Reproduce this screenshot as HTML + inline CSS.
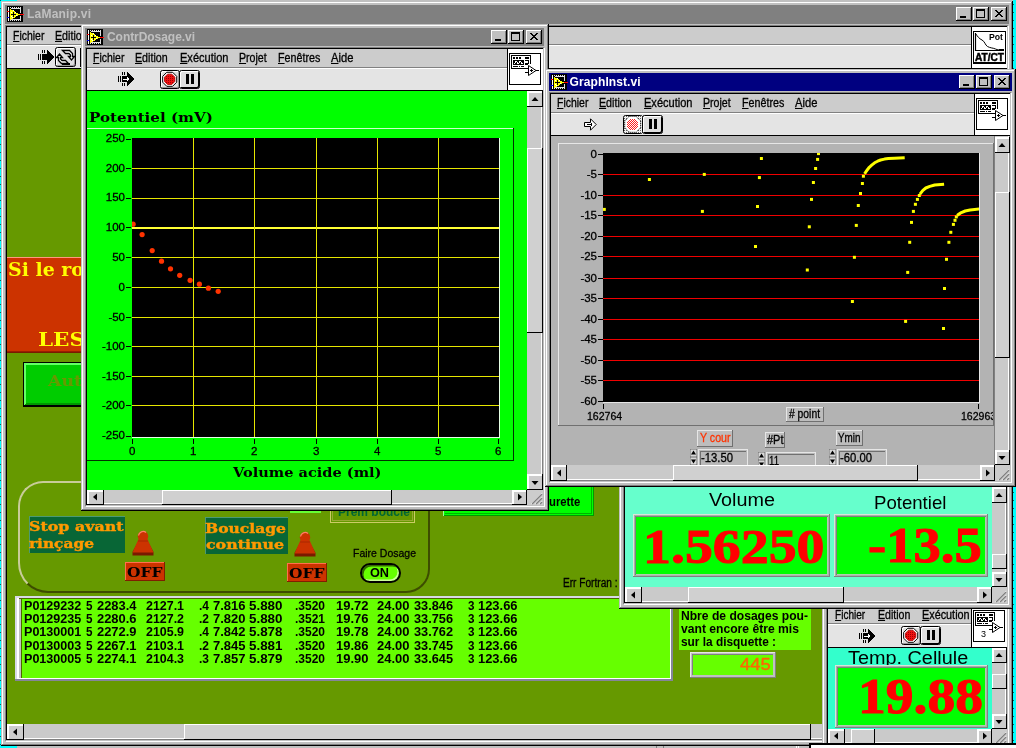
<!DOCTYPE html>
<html lang="fr"><head><meta charset="utf-8"><title>LaManip.vi</title>
<style>
html,body{margin:0;padding:0;}
body{width:1016px;height:748px;overflow:hidden;position:relative;background:#c0c0c0;}
#scr{position:absolute;left:0;top:0;width:1016px;height:748px;overflow:hidden;}
#scr div,#scr span.t,#scr svg{position:absolute;}
#scr span.t{display:block;margin:0;padding:0;-webkit-font-smoothing:antialiased;}
#scr{transform:translateZ(0);will-change:transform;}
#scr u{text-decoration:underline;text-underline-offset:1px;}
</style></head><body><div id="scr">
<div style="left:0px;top:0px;width:17px;height:1px;background:#00ffff;"></div>
<div style="left:0px;top:0px;width:1px;height:748px;background:#00ffff;"></div>
<div style="left:1013px;top:0px;width:3px;height:748px;background:#00ffff;"></div>
<div style="left:0px;top:746px;width:17px;height:2px;background:#00ffff;"></div>
<div style="left:0px;top:0px;width:1px;height:1px;background:#006666;"></div>
<div style="left:1013px;top:4px;width:1px;height:1px;background:#006666;"></div>
<div style="left:0px;top:8px;width:1px;height:1px;background:#006666;"></div>
<div style="left:1013px;top:12px;width:1px;height:1px;background:#006666;"></div>
<div style="left:0px;top:16px;width:1px;height:1px;background:#006666;"></div>
<div style="left:1013px;top:20px;width:1px;height:1px;background:#006666;"></div>
<div style="left:0px;top:24px;width:1px;height:1px;background:#006666;"></div>
<div style="left:1013px;top:28px;width:1px;height:1px;background:#006666;"></div>
<div style="left:0px;top:32px;width:1px;height:1px;background:#006666;"></div>
<div style="left:1013px;top:36px;width:1px;height:1px;background:#006666;"></div>
<div style="left:0px;top:40px;width:1px;height:1px;background:#006666;"></div>
<div style="left:1013px;top:44px;width:1px;height:1px;background:#006666;"></div>
<div style="left:0px;top:48px;width:1px;height:1px;background:#006666;"></div>
<div style="left:1013px;top:52px;width:1px;height:1px;background:#006666;"></div>
<div style="left:0px;top:56px;width:1px;height:1px;background:#006666;"></div>
<div style="left:1013px;top:60px;width:1px;height:1px;background:#006666;"></div>
<div style="left:0px;top:64px;width:1px;height:1px;background:#006666;"></div>
<div style="left:1013px;top:68px;width:1px;height:1px;background:#006666;"></div>
<div style="left:0px;top:72px;width:1px;height:1px;background:#006666;"></div>
<div style="left:1013px;top:76px;width:1px;height:1px;background:#006666;"></div>
<div style="left:0px;top:80px;width:1px;height:1px;background:#006666;"></div>
<div style="left:1013px;top:84px;width:1px;height:1px;background:#006666;"></div>
<div style="left:0px;top:88px;width:1px;height:1px;background:#006666;"></div>
<div style="left:1013px;top:92px;width:1px;height:1px;background:#006666;"></div>
<div style="left:0px;top:96px;width:1px;height:1px;background:#006666;"></div>
<div style="left:1013px;top:100px;width:1px;height:1px;background:#006666;"></div>
<div style="left:0px;top:104px;width:1px;height:1px;background:#006666;"></div>
<div style="left:1013px;top:108px;width:1px;height:1px;background:#006666;"></div>
<div style="left:0px;top:112px;width:1px;height:1px;background:#006666;"></div>
<div style="left:1013px;top:116px;width:1px;height:1px;background:#006666;"></div>
<div style="left:0px;top:120px;width:1px;height:1px;background:#006666;"></div>
<div style="left:1013px;top:124px;width:1px;height:1px;background:#006666;"></div>
<div style="left:0px;top:128px;width:1px;height:1px;background:#006666;"></div>
<div style="left:1013px;top:132px;width:1px;height:1px;background:#006666;"></div>
<div style="left:0px;top:136px;width:1px;height:1px;background:#006666;"></div>
<div style="left:1013px;top:140px;width:1px;height:1px;background:#006666;"></div>
<div style="left:0px;top:144px;width:1px;height:1px;background:#006666;"></div>
<div style="left:1013px;top:148px;width:1px;height:1px;background:#006666;"></div>
<div style="left:0px;top:152px;width:1px;height:1px;background:#006666;"></div>
<div style="left:1013px;top:156px;width:1px;height:1px;background:#006666;"></div>
<div style="left:0px;top:160px;width:1px;height:1px;background:#006666;"></div>
<div style="left:1013px;top:164px;width:1px;height:1px;background:#006666;"></div>
<div style="left:0px;top:168px;width:1px;height:1px;background:#006666;"></div>
<div style="left:1013px;top:172px;width:1px;height:1px;background:#006666;"></div>
<div style="left:0px;top:176px;width:1px;height:1px;background:#006666;"></div>
<div style="left:1013px;top:180px;width:1px;height:1px;background:#006666;"></div>
<div style="left:0px;top:184px;width:1px;height:1px;background:#006666;"></div>
<div style="left:1013px;top:188px;width:1px;height:1px;background:#006666;"></div>
<div style="left:0px;top:192px;width:1px;height:1px;background:#006666;"></div>
<div style="left:1013px;top:196px;width:1px;height:1px;background:#006666;"></div>
<div style="left:0px;top:200px;width:1px;height:1px;background:#006666;"></div>
<div style="left:1013px;top:204px;width:1px;height:1px;background:#006666;"></div>
<div style="left:0px;top:208px;width:1px;height:1px;background:#006666;"></div>
<div style="left:1013px;top:212px;width:1px;height:1px;background:#006666;"></div>
<div style="left:0px;top:216px;width:1px;height:1px;background:#006666;"></div>
<div style="left:1013px;top:220px;width:1px;height:1px;background:#006666;"></div>
<div style="left:0px;top:224px;width:1px;height:1px;background:#006666;"></div>
<div style="left:1013px;top:228px;width:1px;height:1px;background:#006666;"></div>
<div style="left:0px;top:232px;width:1px;height:1px;background:#006666;"></div>
<div style="left:1013px;top:236px;width:1px;height:1px;background:#006666;"></div>
<div style="left:0px;top:240px;width:1px;height:1px;background:#006666;"></div>
<div style="left:1013px;top:244px;width:1px;height:1px;background:#006666;"></div>
<div style="left:0px;top:248px;width:1px;height:1px;background:#006666;"></div>
<div style="left:1013px;top:252px;width:1px;height:1px;background:#006666;"></div>
<div style="left:0px;top:256px;width:1px;height:1px;background:#006666;"></div>
<div style="left:1013px;top:260px;width:1px;height:1px;background:#006666;"></div>
<div style="left:0px;top:264px;width:1px;height:1px;background:#006666;"></div>
<div style="left:1013px;top:268px;width:1px;height:1px;background:#006666;"></div>
<div style="left:0px;top:272px;width:1px;height:1px;background:#006666;"></div>
<div style="left:1013px;top:276px;width:1px;height:1px;background:#006666;"></div>
<div style="left:0px;top:280px;width:1px;height:1px;background:#006666;"></div>
<div style="left:1013px;top:284px;width:1px;height:1px;background:#006666;"></div>
<div style="left:0px;top:288px;width:1px;height:1px;background:#006666;"></div>
<div style="left:1013px;top:292px;width:1px;height:1px;background:#006666;"></div>
<div style="left:0px;top:296px;width:1px;height:1px;background:#006666;"></div>
<div style="left:1013px;top:300px;width:1px;height:1px;background:#006666;"></div>
<div style="left:0px;top:304px;width:1px;height:1px;background:#006666;"></div>
<div style="left:1013px;top:308px;width:1px;height:1px;background:#006666;"></div>
<div style="left:0px;top:312px;width:1px;height:1px;background:#006666;"></div>
<div style="left:1013px;top:316px;width:1px;height:1px;background:#006666;"></div>
<div style="left:0px;top:320px;width:1px;height:1px;background:#006666;"></div>
<div style="left:1013px;top:324px;width:1px;height:1px;background:#006666;"></div>
<div style="left:0px;top:328px;width:1px;height:1px;background:#006666;"></div>
<div style="left:1013px;top:332px;width:1px;height:1px;background:#006666;"></div>
<div style="left:0px;top:336px;width:1px;height:1px;background:#006666;"></div>
<div style="left:1013px;top:340px;width:1px;height:1px;background:#006666;"></div>
<div style="left:0px;top:344px;width:1px;height:1px;background:#006666;"></div>
<div style="left:1013px;top:348px;width:1px;height:1px;background:#006666;"></div>
<div style="left:0px;top:352px;width:1px;height:1px;background:#006666;"></div>
<div style="left:1013px;top:356px;width:1px;height:1px;background:#006666;"></div>
<div style="left:0px;top:360px;width:1px;height:1px;background:#006666;"></div>
<div style="left:1013px;top:364px;width:1px;height:1px;background:#006666;"></div>
<div style="left:0px;top:368px;width:1px;height:1px;background:#006666;"></div>
<div style="left:1013px;top:372px;width:1px;height:1px;background:#006666;"></div>
<div style="left:0px;top:376px;width:1px;height:1px;background:#006666;"></div>
<div style="left:1013px;top:380px;width:1px;height:1px;background:#006666;"></div>
<div style="left:0px;top:384px;width:1px;height:1px;background:#006666;"></div>
<div style="left:1013px;top:388px;width:1px;height:1px;background:#006666;"></div>
<div style="left:0px;top:392px;width:1px;height:1px;background:#006666;"></div>
<div style="left:1013px;top:396px;width:1px;height:1px;background:#006666;"></div>
<div style="left:0px;top:400px;width:1px;height:1px;background:#006666;"></div>
<div style="left:1013px;top:404px;width:1px;height:1px;background:#006666;"></div>
<div style="left:0px;top:408px;width:1px;height:1px;background:#006666;"></div>
<div style="left:1013px;top:412px;width:1px;height:1px;background:#006666;"></div>
<div style="left:0px;top:416px;width:1px;height:1px;background:#006666;"></div>
<div style="left:1013px;top:420px;width:1px;height:1px;background:#006666;"></div>
<div style="left:0px;top:424px;width:1px;height:1px;background:#006666;"></div>
<div style="left:1013px;top:428px;width:1px;height:1px;background:#006666;"></div>
<div style="left:0px;top:432px;width:1px;height:1px;background:#006666;"></div>
<div style="left:1013px;top:436px;width:1px;height:1px;background:#006666;"></div>
<div style="left:0px;top:440px;width:1px;height:1px;background:#006666;"></div>
<div style="left:1013px;top:444px;width:1px;height:1px;background:#006666;"></div>
<div style="left:0px;top:448px;width:1px;height:1px;background:#006666;"></div>
<div style="left:1013px;top:452px;width:1px;height:1px;background:#006666;"></div>
<div style="left:0px;top:456px;width:1px;height:1px;background:#006666;"></div>
<div style="left:1013px;top:460px;width:1px;height:1px;background:#006666;"></div>
<div style="left:0px;top:464px;width:1px;height:1px;background:#006666;"></div>
<div style="left:1013px;top:468px;width:1px;height:1px;background:#006666;"></div>
<div style="left:0px;top:472px;width:1px;height:1px;background:#006666;"></div>
<div style="left:1013px;top:476px;width:1px;height:1px;background:#006666;"></div>
<div style="left:0px;top:480px;width:1px;height:1px;background:#006666;"></div>
<div style="left:1013px;top:484px;width:1px;height:1px;background:#006666;"></div>
<div style="left:0px;top:488px;width:1px;height:1px;background:#006666;"></div>
<div style="left:1013px;top:492px;width:1px;height:1px;background:#006666;"></div>
<div style="left:0px;top:496px;width:1px;height:1px;background:#006666;"></div>
<div style="left:1013px;top:500px;width:1px;height:1px;background:#006666;"></div>
<div style="left:0px;top:504px;width:1px;height:1px;background:#006666;"></div>
<div style="left:1013px;top:508px;width:1px;height:1px;background:#006666;"></div>
<div style="left:0px;top:512px;width:1px;height:1px;background:#006666;"></div>
<div style="left:1013px;top:516px;width:1px;height:1px;background:#006666;"></div>
<div style="left:0px;top:520px;width:1px;height:1px;background:#006666;"></div>
<div style="left:1013px;top:524px;width:1px;height:1px;background:#006666;"></div>
<div style="left:0px;top:528px;width:1px;height:1px;background:#006666;"></div>
<div style="left:1013px;top:532px;width:1px;height:1px;background:#006666;"></div>
<div style="left:0px;top:536px;width:1px;height:1px;background:#006666;"></div>
<div style="left:1013px;top:540px;width:1px;height:1px;background:#006666;"></div>
<div style="left:0px;top:544px;width:1px;height:1px;background:#006666;"></div>
<div style="left:1013px;top:548px;width:1px;height:1px;background:#006666;"></div>
<div style="left:0px;top:552px;width:1px;height:1px;background:#006666;"></div>
<div style="left:1013px;top:556px;width:1px;height:1px;background:#006666;"></div>
<div style="left:0px;top:560px;width:1px;height:1px;background:#006666;"></div>
<div style="left:1013px;top:564px;width:1px;height:1px;background:#006666;"></div>
<div style="left:0px;top:568px;width:1px;height:1px;background:#006666;"></div>
<div style="left:1013px;top:572px;width:1px;height:1px;background:#006666;"></div>
<div style="left:0px;top:576px;width:1px;height:1px;background:#006666;"></div>
<div style="left:1013px;top:580px;width:1px;height:1px;background:#006666;"></div>
<div style="left:0px;top:584px;width:1px;height:1px;background:#006666;"></div>
<div style="left:1013px;top:588px;width:1px;height:1px;background:#006666;"></div>
<div style="left:0px;top:592px;width:1px;height:1px;background:#006666;"></div>
<div style="left:1013px;top:596px;width:1px;height:1px;background:#006666;"></div>
<div style="left:0px;top:600px;width:1px;height:1px;background:#006666;"></div>
<div style="left:1013px;top:604px;width:1px;height:1px;background:#006666;"></div>
<div style="left:0px;top:608px;width:1px;height:1px;background:#006666;"></div>
<div style="left:1013px;top:612px;width:1px;height:1px;background:#006666;"></div>
<div style="left:0px;top:616px;width:1px;height:1px;background:#006666;"></div>
<div style="left:1013px;top:620px;width:1px;height:1px;background:#006666;"></div>
<div style="left:0px;top:624px;width:1px;height:1px;background:#006666;"></div>
<div style="left:1013px;top:628px;width:1px;height:1px;background:#006666;"></div>
<div style="left:0px;top:632px;width:1px;height:1px;background:#006666;"></div>
<div style="left:1013px;top:636px;width:1px;height:1px;background:#006666;"></div>
<div style="left:0px;top:640px;width:1px;height:1px;background:#006666;"></div>
<div style="left:1013px;top:644px;width:1px;height:1px;background:#006666;"></div>
<div style="left:0px;top:648px;width:1px;height:1px;background:#006666;"></div>
<div style="left:1013px;top:652px;width:1px;height:1px;background:#006666;"></div>
<div style="left:0px;top:656px;width:1px;height:1px;background:#006666;"></div>
<div style="left:1013px;top:660px;width:1px;height:1px;background:#006666;"></div>
<div style="left:0px;top:664px;width:1px;height:1px;background:#006666;"></div>
<div style="left:1013px;top:668px;width:1px;height:1px;background:#006666;"></div>
<div style="left:0px;top:672px;width:1px;height:1px;background:#006666;"></div>
<div style="left:1013px;top:676px;width:1px;height:1px;background:#006666;"></div>
<div style="left:0px;top:680px;width:1px;height:1px;background:#006666;"></div>
<div style="left:1013px;top:684px;width:1px;height:1px;background:#006666;"></div>
<div style="left:0px;top:688px;width:1px;height:1px;background:#006666;"></div>
<div style="left:1013px;top:692px;width:1px;height:1px;background:#006666;"></div>
<div style="left:0px;top:696px;width:1px;height:1px;background:#006666;"></div>
<div style="left:1013px;top:700px;width:1px;height:1px;background:#006666;"></div>
<div style="left:0px;top:704px;width:1px;height:1px;background:#006666;"></div>
<div style="left:1013px;top:708px;width:1px;height:1px;background:#006666;"></div>
<div style="left:0px;top:712px;width:1px;height:1px;background:#006666;"></div>
<div style="left:1013px;top:716px;width:1px;height:1px;background:#006666;"></div>
<div style="left:0px;top:720px;width:1px;height:1px;background:#006666;"></div>
<div style="left:1013px;top:724px;width:1px;height:1px;background:#006666;"></div>
<div style="left:0px;top:728px;width:1px;height:1px;background:#006666;"></div>
<div style="left:1013px;top:732px;width:1px;height:1px;background:#006666;"></div>
<div style="left:0px;top:736px;width:1px;height:1px;background:#006666;"></div>
<div style="left:1013px;top:740px;width:1px;height:1px;background:#006666;"></div>
<div style="left:0px;top:744px;width:1px;height:1px;background:#006666;"></div>
<div style="left:1013px;top:748px;width:1px;height:1px;background:#006666;"></div>
<div style="left:1px;top:1px;width:1012px;height:745px;background:#c0c0c0;"></div>
<div style="left:1px;top:745px;width:1012px;height:1px;background:#000;"></div>
<div style="left:1012px;top:1px;width:1px;height:745px;background:#000;"></div>
<div style="left:2px;top:744px;width:1010px;height:1px;background:#808080;"></div>
<div style="left:1011px;top:2px;width:1px;height:743px;background:#808080;"></div>
<div style="left:2px;top:2px;width:1009px;height:1px;background:#fff;"></div>
<div style="left:2px;top:2px;width:1px;height:742px;background:#fff;"></div>
<div style="left:5px;top:5px;width:1004px;height:19px;background:#808080;"></div>
<svg style="left:7px;top:6px" width="18" height="16" viewBox="0 0 18 16" shape-rendering="crispEdges"><rect width="16" height="16" fill="#000"/><rect x="1" y="1" width="1" height="14" fill="#fff"/><rect x="0" y="5" width="2" height="1" fill="#f00"/><rect x="0" y="11" width="2" height="1" fill="#00f"/><path d="M3 1h1v1h-1zM5 1h1v1h-1zM7 1h1v1h-1zM9 1h1v1h-1zM11 1h1v1h-1zM4 2h9v1h-9zM13 1h1v6h-1zM13 10h1v5h-1zM4 13h9v1h-9zM3 14h1v1h-1zM5 14h1v1h-1zM7 14h1v1h-1zM9 14h1v1h-1zM11 14h1v1h-1z" fill="#e0e0e0"/><polygon points="3,3 13,8.5 3,14" fill="#ff0"/><path d="M6 4h1v1h-1zM4 6h1v1h-1zM8 6h1v1h-1zM5 11h1v1h-1zM9 9h1v1h-1zM4 10h1v1h-1z" fill="#fff"/><rect x="4" y="8" width="5" height="1" fill="#000"/><rect x="6" y="6" width="1" height="5" fill="#000"/><rect x="13" y="8" width="4" height="1" fill="#f00"/></svg>
<span class="t" style="font-family:'Liberation Sans',sans-serif;font-size:12px;line-height:12px;color:#c0c0c0;white-space:pre;font-weight:bold;letter-spacing:0.220px;left:27px;top:7.84px;">LaManip.vi</span>
<div style="left:991px;top:7px;width:16px;height:14px;background:#c0c0c0;"></div>
<div style="left:991px;top:7px;width:15px;height:1px;background:#fff;"></div>
<div style="left:991px;top:7px;width:1px;height:13px;background:#fff;"></div>
<div style="left:991px;top:20px;width:16px;height:1px;background:#000;"></div>
<div style="left:1006px;top:7px;width:1px;height:14px;background:#000;"></div>
<div style="left:992px;top:19px;width:14px;height:1px;background:#808080;"></div>
<div style="left:1005px;top:8px;width:1px;height:12px;background:#808080;"></div>
<svg style="left:995px;top:10px" width="8" height="7" viewBox="0 0 8 7" shape-rendering="crispEdges"><path d="M0 0h2v1h-2zM6 0h2v1h-2zM1 1h2v1h-2zM5 1h2v1h-2zM2 2h4v1h-4zM3 3h2v1h-2zM2 4h4v1h-4zM1 5h2v1h-2zM5 5h2v1h-2zM0 6h2v1h-2zM6 6h2v1h-2z" fill="#000"/></svg>
<div style="left:973px;top:7px;width:16px;height:14px;background:#c0c0c0;"></div>
<div style="left:973px;top:7px;width:15px;height:1px;background:#fff;"></div>
<div style="left:973px;top:7px;width:1px;height:13px;background:#fff;"></div>
<div style="left:973px;top:20px;width:16px;height:1px;background:#000;"></div>
<div style="left:988px;top:7px;width:1px;height:14px;background:#000;"></div>
<div style="left:974px;top:19px;width:14px;height:1px;background:#808080;"></div>
<div style="left:987px;top:8px;width:1px;height:12px;background:#808080;"></div>
<div style="left:976px;top:9px;width:9px;height:9px;background:#000;"></div>
<div style="left:977px;top:11px;width:7px;height:6px;background:#c0c0c0;"></div>
<div style="left:956px;top:7px;width:16px;height:14px;background:#c0c0c0;"></div>
<div style="left:956px;top:7px;width:15px;height:1px;background:#fff;"></div>
<div style="left:956px;top:7px;width:1px;height:13px;background:#fff;"></div>
<div style="left:956px;top:20px;width:16px;height:1px;background:#000;"></div>
<div style="left:971px;top:7px;width:1px;height:14px;background:#000;"></div>
<div style="left:957px;top:19px;width:14px;height:1px;background:#808080;"></div>
<div style="left:970px;top:8px;width:1px;height:12px;background:#808080;"></div>
<div style="left:960px;top:16px;width:6px;height:2px;background:#000;"></div>
<div style="left:5px;top:25px;width:1003px;height:1px;background:#808080;"></div>
<div style="left:5px;top:25px;width:1px;height:716px;background:#808080;"></div>
<div style="left:6px;top:26px;width:1001px;height:1px;background:#000;"></div>
<div style="left:6px;top:26px;width:1px;height:714px;background:#000;"></div>
<div style="left:6px;top:741px;width:1003px;height:1px;background:#fff;"></div>
<div style="left:1008px;top:26px;width:1px;height:716px;background:#fff;"></div>
<div style="left:7px;top:27px;width:1000px;height:17px;background:#cccccc;"></div>
<div style="left:7px;top:44px;width:1000px;height:1px;background:#808080;"></div>
<div style="left:7px;top:45px;width:1000px;height:1px;background:#fff;"></div>
<span class="t" style="font-family:'Liberation Sans',sans-serif;font-size:12px;line-height:12px;color:#000;white-space:pre;-webkit-text-stroke:0.3px #000;transform:scaleX(0.8715);transform-origin:left top;left:12.6px;top:29.84px;"><u>F</u>ichier</span>
<span class="t" style="font-family:'Liberation Sans',sans-serif;font-size:12px;line-height:12px;color:#000;white-space:pre;-webkit-text-stroke:0.3px #000;transform:scaleX(0.8882);transform-origin:left top;left:55.4px;top:29.84px;"><u>E</u>dition</span>
<div style="left:7px;top:46px;width:1000px;height:22px;background:#e4e4e4;"></div>
<div style="left:7px;top:68px;width:1000px;height:1px;background:#000;"></div>
<div style="left:971px;top:27px;width:1px;height:41px;background:#000;"></div>
<div style="left:972px;top:27px;width:35px;height:41px;background:#fff;"></div>
<svg style="left:973px;top:31px" width="33" height="33" viewBox="0 0 33 33"><rect x="0.5" y="0.5" width="32" height="32" fill="#fff" stroke="#000"/><rect x="0" y="31" width="33" height="2" fill="#000"/><path d="M2.5 2v17.5h28" stroke="#000" stroke-width="1.2" fill="none"/><path d="M2.5 2.5C5 6 6 7.5 9 9s3 5 5.5 6.5s6 1.500 8 2.500s4 1 8 1.200" stroke="#000" stroke-width="1" fill="none"/><rect x="26" y="18" width="5" height="2" fill="#000"/><text x="16" y="9.2" font-family="Liberation Sans,sans-serif" font-size="9.500" font-weight="bold" fill="#000" textLength="14" lengthAdjust="spacingAndGlyphs">Pot</text><text x="2" y="29.500" font-family="Liberation Sans,sans-serif" font-size="10.500" font-weight="bold" fill="#000" textLength="29" lengthAdjust="spacingAndGlyphs" stroke="#000" stroke-width="0.5">AT/CT</text></svg>
<svg style="left:37.5px;top:50px" width="16" height="14" viewBox="0 0 16 14" shape-rendering="crispEdges"><path d="M0 4h1v6h-1zM2 4h1v6h-1zM4 0h1v3h-1zM6 0h1v3h-1zM4 11h1v3h-1zM6 11h1v3h-1z" fill="#000"/><polygon points="4,4 9,4 9,0 16,7 9,14 9,10 4,10" fill="#000"/></svg>
<div style="left:55px;top:47px;width:19px;height:18px;border:1px solid #000;border-radius:2.5px;background:#dedede;box-shadow:inset 1px 1px 0 #fff, inset -1px -1px 0 #999;"></div>
<svg style="left:55px;top:47px" width="21" height="20" viewBox="0 0 21 20" shape-rendering="crispEdges"><g shape-rendering="geometricPrecision" stroke="#000" stroke-width="1.3" fill="#fff" stroke-linejoin="miter"><polygon points="7.5,3.500 14.500,3.500 17.500,6.500 17.500,9.500 19.500,9.500 16.500,13 13.500,9.500 15.500,9.500 15.500,8 14,6.500 10.500,6.500"/><polygon points="13.500,16.500 6.500,16.500 3.500,13.500 3.500,10.500 1.500,10.500 4.500,7 7.500,10.500 5.500,10.500 5.500,12 7,13.500 10.500,13.500"/></g><rect x="7" y="16" width="8" height="2" fill="#000"/><rect x="7" y="3" width="8" height="1" fill="#000"/></svg>
<div style="left:80px;top:48px;width:1px;height:19px;background:#000;"></div>
<div style="left:7px;top:69px;width:1000px;height:655px;background:#669900;"></div>
<div style="left:7px;top:257px;width:84px;height:96px;background:#cc3300;"></div>
<div style="left:7px;top:257px;width:84px;height:1px;background:#ff9980;"></div>
<div style="left:7px;top:352px;width:84px;height:1px;background:#7a1a00;"></div>
<div style="left:7px;top:351px;width:84px;height:1px;background:#991f00;"></div>
<span class="t" style="font-family:'DejaVu Serif','Liberation Serif',serif;font-size:18.7px;line-height:18.7px;color:#ffff00;white-space:pre;font-weight:bold;transform:scaleX(1.0146);transform-origin:left top;left:7.5px;top:260.31px;">Si le ro</span>
<span class="t" style="font-family:'DejaVu Serif','Liberation Serif',serif;font-size:18.7px;line-height:18.7px;color:#ffff00;white-space:pre;font-weight:bold;transform:scaleX(1.1494);transform-origin:left top;left:37.5px;top:330.31px;">LES</span>
<div style="left:23px;top:362px;width:118px;height:45px;background:#000;"></div>
<div style="left:24px;top:363px;width:116px;height:42px;background:#00cc00;"></div>
<div style="left:24px;top:363px;width:116px;height:1px;background:#66ff66;"></div>
<div style="left:24px;top:364px;width:116px;height:1px;background:#66ff66;"></div>
<div style="left:24px;top:363px;width:1px;height:42px;background:#66ff66;"></div>
<div style="left:25px;top:363px;width:1px;height:41px;background:#66ff66;"></div>
<div style="left:25px;top:404px;width:115px;height:1px;background:#009900;"></div>
<div style="left:26px;top:403px;width:114px;height:1px;background:#009900;"></div>
<span class="t" style="font-family:'DejaVu Serif','Liberation Serif',serif;font-size:14.3px;line-height:14.3px;color:#669900;white-space:pre;font-weight:bold;transform:scaleX(1.2102);transform-origin:left top;left:47.5px;top:373.62px;">Aut</span>
<div style="left:18px;top:481px;width:408px;height:108px;border:2px solid;border-color:#c8cc99 #3d4d00 #3d4d00 #c8cc99;border-radius:25px 24px 24px 30px;"></div>
<div style="left:29px;top:516px;width:96px;height:37px;background:#086636;"></div>
<div style="left:29px;top:516px;width:96px;height:1px;background:#4d9973;"></div>
<div style="left:29px;top:516px;width:1px;height:37px;background:#4d9973;"></div>
<span class="t" style="font-family:'DejaVu Serif','Liberation Serif',serif;font-size:13px;line-height:13px;color:#ff9900;white-space:pre;font-weight:bold;transform:scaleX(1.2186);transform-origin:left top;left:29.0px;top:520.44px;-webkit-text-stroke:0.4px #ff9900;">Stop avant</span>
<span class="t" style="font-family:'DejaVu Serif','Liberation Serif',serif;font-size:13px;line-height:13px;color:#ff9900;white-space:pre;font-weight:bold;transform:scaleX(1.1828);transform-origin:left top;left:29.0px;top:537.34px;-webkit-text-stroke:0.4px #ff9900;">rinçage</span>
<div style="left:205px;top:517px;width:83px;height:37px;background:#086636;"></div>
<div style="left:205px;top:517px;width:83px;height:1px;background:#4d9973;"></div>
<div style="left:205px;top:517px;width:1px;height:37px;background:#4d9973;"></div>
<span class="t" style="font-family:'DejaVu Serif','Liberation Serif',serif;font-size:13px;line-height:13px;color:#ff9900;white-space:pre;font-weight:bold;transform:scaleX(1.1956);transform-origin:left top;left:205.4px;top:521.74px;-webkit-text-stroke:0.4px #ff9900;">Bouclage</span>
<span class="t" style="font-family:'DejaVu Serif','Liberation Serif',serif;font-size:13px;line-height:13px;color:#ff9900;white-space:pre;font-weight:bold;transform:scaleX(1.2158);transform-origin:left top;left:205.8px;top:538.04px;-webkit-text-stroke:0.4px #ff9900;">continue</span>
<svg style="left:132px;top:530px" width="24" height="28" viewBox="-1 -1 24 28"><polygon points="6,9 14,9 20.500,21 20.500,24.500 -0.500,24.500 -0.500,21" fill="#7a1a00"/><polygon points="6,7 14,7 20.500,21.500 -0.500,21.500" fill="#cc3300"/><circle cx="10" cy="5.2" r="5.2" fill="#cc3300"/><path d="M5.500 4.500a4.600 4.600 0 0 1 7.500 -3" stroke="#ff8066" stroke-width="1.300" fill="none"/><path d="M5 10h10" stroke="#a82800" stroke-width="1" fill="none"/></svg>
<svg style="left:293.5px;top:531px" width="24" height="28" viewBox="-1 -1 24 28"><polygon points="6,9 14,9 20.500,21 20.500,24.500 -0.500,24.500 -0.500,21" fill="#7a1a00"/><polygon points="6,7 14,7 20.500,21.500 -0.500,21.500" fill="#cc3300"/><circle cx="10" cy="5.2" r="5.2" fill="#cc3300"/><path d="M5.500 4.500a4.600 4.600 0 0 1 7.500 -3" stroke="#ff8066" stroke-width="1.300" fill="none"/><path d="M5 10h10" stroke="#a82800" stroke-width="1" fill="none"/></svg>
<div style="left:125px;top:562px;width:40px;height:19px;background:#cc3300;"></div>
<div style="left:125px;top:562px;width:40px;height:1px;background:#ff704d;"></div>
<div style="left:125px;top:562px;width:1px;height:19px;background:#ff704d;"></div>
<div style="left:125px;top:580px;width:40px;height:1px;background:#801f00;"></div>
<div style="left:164px;top:562px;width:1px;height:19px;background:#801f00;"></div>
<span class="t" style="font-family:'DejaVu Serif','Liberation Serif',serif;font-size:13px;line-height:13px;color:#000;white-space:pre;font-weight:bold;transform:scaleX(1.1914);transform-origin:left top;left:127.2px;top:565.54px;">OFF</span>
<div style="left:287px;top:563px;width:40px;height:19px;background:#cc3300;"></div>
<div style="left:287px;top:563px;width:40px;height:1px;background:#ff704d;"></div>
<div style="left:287px;top:563px;width:1px;height:19px;background:#ff704d;"></div>
<div style="left:287px;top:581px;width:40px;height:1px;background:#801f00;"></div>
<div style="left:326px;top:563px;width:1px;height:19px;background:#801f00;"></div>
<span class="t" style="font-family:'DejaVu Serif','Liberation Serif',serif;font-size:13px;line-height:13px;color:#000;white-space:pre;font-weight:bold;transform:scaleX(1.1914);transform-origin:left top;left:289.2px;top:566.54px;">OFF</span>
<div style="left:290px;top:511px;width:31px;height:2px;background:#66ff33;"></div>
<div style="left:330px;top:500px;width:85px;height:23px;background:#cccc66;"></div>
<div style="left:331px;top:500px;width:83px;height:22px;background:#669900;"></div>
<div style="left:332px;top:500px;width:81px;height:21px;background:#99aa33;"></div>
<div style="left:333px;top:500px;width:79px;height:20px;background:#669900;"></div>
<span class="t" style="font-family:'Liberation Sans',sans-serif;font-size:13px;line-height:13px;color:#006633;white-space:pre;font-weight:bold;transform:scaleX(0.9227);transform-origin:left top;left:338px;top:505.40px;">Prem boucle</span>
<span class="t" style="font-family:'Liberation Sans',sans-serif;font-size:11.5px;line-height:11.5px;color:#000;white-space:pre;-webkit-text-stroke:0.3px #000;transform:scaleX(0.9124);transform-origin:left top;left:352.8px;top:547.97px;">Faire Dosage</span>
<div style="left:360px;top:563px;width:37px;height:16px;border:2px solid #000;border-radius:10px;background:#66ff00;box-shadow:inset 1.5px 1.5px 0 #336600, inset -1.5px -1.5px 0 #ccff99;"></div>
<span class="t" style="font-family:'Liberation Sans',sans-serif;font-size:12.5px;line-height:12.5px;color:#000;white-space:pre;font-weight:bold;transform:scaleX(1.0133);transform-origin:left top;left:370px;top:567.22px;">ON</span>
<div style="left:443px;top:480px;width:151px;height:36px;background:#00ff00;"></div>
<div style="left:443px;top:515px;width:151px;height:1px;background:#009900;"></div>
<div style="left:593px;top:480px;width:1px;height:36px;background:#009900;"></div>
<div style="left:445px;top:513px;width:147px;height:1px;background:#00b300;"></div>
<div style="left:591px;top:480px;width:1px;height:34px;background:#00b300;"></div>
<div style="left:443px;top:480px;width:1px;height:36px;background:#99ff99;"></div>
<span class="t" style="font-family:'Liberation Sans',sans-serif;font-size:13px;line-height:13px;color:#000;white-space:pre;font-weight:bold;transform:scaleX(0.8692);transform-origin:left top;left:548.6px;top:494.80px;">urette</span>
<span class="t" style="font-family:'Liberation Sans',sans-serif;font-size:12px;line-height:12px;color:#000;white-space:pre;-webkit-text-stroke:0.3px #000;transform:scaleX(0.8425);transform-origin:left top;left:562.5px;top:576.94px;">Err Fortran :</span>
<div style="left:15px;top:596px;width:658px;height:85px;background:#85859a;"></div>
<div style="left:15px;top:596px;width:656px;height:83px;background:#d8d8e6;"></div>
<div style="left:17px;top:598px;width:654px;height:81px;background:#fff;"></div>
<div style="left:19px;top:598px;width:3px;height:80px;background:#c0c0c0;"></div>
<div style="left:19px;top:598px;width:651px;height:1px;background:#4d6600;"></div>
<div style="left:21px;top:598px;width:1px;height:80px;background:#4d6600;"></div>
<div style="left:22px;top:599px;width:648px;height:79px;background:#66ff00;"></div>
<span class="t" style="font-family:'Liberation Sans',sans-serif;font-size:11.9px;line-height:11.9px;color:#000;white-space:pre;font-weight:bold;transform:scaleX(1.0565);transform-origin:left top;left:24px;top:601.33px;">P0129232</span>
<span class="t" style="font-family:'Liberation Sans',sans-serif;font-size:11.9px;line-height:11.9px;color:#000;white-space:pre;font-weight:bold;transform:scaleX(0.9811);transform-origin:left top;left:86px;top:601.33px;">5</span>
<span class="t" style="font-family:'Liberation Sans',sans-serif;font-size:11.9px;line-height:11.9px;color:#000;white-space:pre;font-weight:bold;transform:scaleX(1.0859);transform-origin:left top;left:96.5px;top:601.33px;">2283.4</span>
<span class="t" style="font-family:'Liberation Sans',sans-serif;font-size:11.9px;line-height:11.9px;color:#000;white-space:pre;font-weight:bold;transform:scaleX(1.0447);transform-origin:left top;left:146px;top:601.33px;">2127.1</span>
<span class="t" style="font-family:'Liberation Sans',sans-serif;font-size:11.9px;line-height:11.9px;color:#000;white-space:pre;font-weight:bold;transform:scaleX(1.0079);transform-origin:left top;left:198.5px;top:601.33px;">.4</span>
<span class="t" style="font-family:'Liberation Sans',sans-serif;font-size:11.9px;line-height:11.9px;color:#000;white-space:pre;font-weight:bold;transform:scaleX(1.0919);transform-origin:left top;left:212.5px;top:601.33px;">7.816</span>
<span class="t" style="font-family:'Liberation Sans',sans-serif;font-size:11.9px;line-height:11.9px;color:#000;white-space:pre;font-weight:bold;transform:scaleX(1.1255);transform-origin:left top;left:249px;top:601.33px;">5.880</span>
<span class="t" style="font-family:'Liberation Sans',sans-serif;font-size:11.9px;line-height:11.9px;color:#000;white-space:pre;font-weight:bold;transform:scaleX(1.0079);transform-origin:left top;left:295px;top:601.33px;">.3520</span>
<span class="t" style="font-family:'Liberation Sans',sans-serif;font-size:11.9px;line-height:11.9px;color:#000;white-space:pre;font-weight:bold;transform:scaleX(1.0919);transform-origin:left top;left:336px;top:601.33px;">19.72</span>
<span class="t" style="font-family:'Liberation Sans',sans-serif;font-size:11.9px;line-height:11.9px;color:#000;white-space:pre;font-weight:bold;transform:scaleX(1.0919);transform-origin:left top;left:376.5px;top:601.33px;">24.00</span>
<span class="t" style="font-family:'Liberation Sans',sans-serif;font-size:11.9px;line-height:11.9px;color:#000;white-space:pre;font-weight:bold;transform:scaleX(1.0722);transform-origin:left top;left:414px;top:601.33px;">33.846</span>
<span class="t" style="font-family:'Liberation Sans',sans-serif;font-size:11.9px;line-height:11.9px;color:#000;white-space:pre;font-weight:bold;transform:scaleX(0.9811);transform-origin:left top;left:467.5px;top:601.33px;">3</span>
<span class="t" style="font-family:'Liberation Sans',sans-serif;font-size:11.9px;line-height:11.9px;color:#000;white-space:pre;font-weight:bold;transform:scaleX(1.0859);transform-origin:left top;left:477.5px;top:601.33px;">123.66</span>
<span class="t" style="font-family:'Liberation Sans',sans-serif;font-size:11.9px;line-height:11.9px;color:#000;white-space:pre;font-weight:bold;transform:scaleX(1.0565);transform-origin:left top;left:24px;top:614.23px;">P0129235</span>
<span class="t" style="font-family:'Liberation Sans',sans-serif;font-size:11.9px;line-height:11.9px;color:#000;white-space:pre;font-weight:bold;transform:scaleX(0.9811);transform-origin:left top;left:86px;top:614.23px;">5</span>
<span class="t" style="font-family:'Liberation Sans',sans-serif;font-size:11.9px;line-height:11.9px;color:#000;white-space:pre;font-weight:bold;transform:scaleX(1.0859);transform-origin:left top;left:96.5px;top:614.23px;">2280.6</span>
<span class="t" style="font-family:'Liberation Sans',sans-serif;font-size:11.9px;line-height:11.9px;color:#000;white-space:pre;font-weight:bold;transform:scaleX(1.0447);transform-origin:left top;left:146px;top:614.23px;">2127.2</span>
<span class="t" style="font-family:'Liberation Sans',sans-serif;font-size:11.9px;line-height:11.9px;color:#000;white-space:pre;font-weight:bold;transform:scaleX(1.0079);transform-origin:left top;left:198.5px;top:614.23px;">.2</span>
<span class="t" style="font-family:'Liberation Sans',sans-serif;font-size:11.9px;line-height:11.9px;color:#000;white-space:pre;font-weight:bold;transform:scaleX(1.0919);transform-origin:left top;left:212.5px;top:614.23px;">7.820</span>
<span class="t" style="font-family:'Liberation Sans',sans-serif;font-size:11.9px;line-height:11.9px;color:#000;white-space:pre;font-weight:bold;transform:scaleX(1.1255);transform-origin:left top;left:249px;top:614.23px;">5.880</span>
<span class="t" style="font-family:'Liberation Sans',sans-serif;font-size:11.9px;line-height:11.9px;color:#000;white-space:pre;font-weight:bold;transform:scaleX(1.0079);transform-origin:left top;left:295px;top:614.23px;">.3521</span>
<span class="t" style="font-family:'Liberation Sans',sans-serif;font-size:11.9px;line-height:11.9px;color:#000;white-space:pre;font-weight:bold;transform:scaleX(1.0919);transform-origin:left top;left:336px;top:614.23px;">19.76</span>
<span class="t" style="font-family:'Liberation Sans',sans-serif;font-size:11.9px;line-height:11.9px;color:#000;white-space:pre;font-weight:bold;transform:scaleX(1.0919);transform-origin:left top;left:376.5px;top:614.23px;">24.00</span>
<span class="t" style="font-family:'Liberation Sans',sans-serif;font-size:11.9px;line-height:11.9px;color:#000;white-space:pre;font-weight:bold;transform:scaleX(1.0722);transform-origin:left top;left:414px;top:614.23px;">33.756</span>
<span class="t" style="font-family:'Liberation Sans',sans-serif;font-size:11.9px;line-height:11.9px;color:#000;white-space:pre;font-weight:bold;transform:scaleX(0.9811);transform-origin:left top;left:467.5px;top:614.23px;">3</span>
<span class="t" style="font-family:'Liberation Sans',sans-serif;font-size:11.9px;line-height:11.9px;color:#000;white-space:pre;font-weight:bold;transform:scaleX(1.0859);transform-origin:left top;left:477.5px;top:614.23px;">123.66</span>
<span class="t" style="font-family:'Liberation Sans',sans-serif;font-size:11.9px;line-height:11.9px;color:#000;white-space:pre;font-weight:bold;transform:scaleX(1.0565);transform-origin:left top;left:24px;top:627.33px;">P0130001</span>
<span class="t" style="font-family:'Liberation Sans',sans-serif;font-size:11.9px;line-height:11.9px;color:#000;white-space:pre;font-weight:bold;transform:scaleX(0.9811);transform-origin:left top;left:86px;top:627.33px;">5</span>
<span class="t" style="font-family:'Liberation Sans',sans-serif;font-size:11.9px;line-height:11.9px;color:#000;white-space:pre;font-weight:bold;transform:scaleX(1.0859);transform-origin:left top;left:96.5px;top:627.33px;">2272.9</span>
<span class="t" style="font-family:'Liberation Sans',sans-serif;font-size:11.9px;line-height:11.9px;color:#000;white-space:pre;font-weight:bold;transform:scaleX(1.0447);transform-origin:left top;left:146px;top:627.33px;">2105.9</span>
<span class="t" style="font-family:'Liberation Sans',sans-serif;font-size:11.9px;line-height:11.9px;color:#000;white-space:pre;font-weight:bold;transform:scaleX(1.0079);transform-origin:left top;left:198.5px;top:627.33px;">.4</span>
<span class="t" style="font-family:'Liberation Sans',sans-serif;font-size:11.9px;line-height:11.9px;color:#000;white-space:pre;font-weight:bold;transform:scaleX(1.0919);transform-origin:left top;left:212.5px;top:627.33px;">7.842</span>
<span class="t" style="font-family:'Liberation Sans',sans-serif;font-size:11.9px;line-height:11.9px;color:#000;white-space:pre;font-weight:bold;transform:scaleX(1.1255);transform-origin:left top;left:249px;top:627.33px;">5.878</span>
<span class="t" style="font-family:'Liberation Sans',sans-serif;font-size:11.9px;line-height:11.9px;color:#000;white-space:pre;font-weight:bold;transform:scaleX(1.0079);transform-origin:left top;left:295px;top:627.33px;">.3520</span>
<span class="t" style="font-family:'Liberation Sans',sans-serif;font-size:11.9px;line-height:11.9px;color:#000;white-space:pre;font-weight:bold;transform:scaleX(1.0919);transform-origin:left top;left:336px;top:627.33px;">19.78</span>
<span class="t" style="font-family:'Liberation Sans',sans-serif;font-size:11.9px;line-height:11.9px;color:#000;white-space:pre;font-weight:bold;transform:scaleX(1.0919);transform-origin:left top;left:376.5px;top:627.33px;">24.00</span>
<span class="t" style="font-family:'Liberation Sans',sans-serif;font-size:11.9px;line-height:11.9px;color:#000;white-space:pre;font-weight:bold;transform:scaleX(1.0722);transform-origin:left top;left:414px;top:627.33px;">33.762</span>
<span class="t" style="font-family:'Liberation Sans',sans-serif;font-size:11.9px;line-height:11.9px;color:#000;white-space:pre;font-weight:bold;transform:scaleX(0.9811);transform-origin:left top;left:467.5px;top:627.33px;">3</span>
<span class="t" style="font-family:'Liberation Sans',sans-serif;font-size:11.9px;line-height:11.9px;color:#000;white-space:pre;font-weight:bold;transform:scaleX(1.0859);transform-origin:left top;left:477.5px;top:627.33px;">123.66</span>
<span class="t" style="font-family:'Liberation Sans',sans-serif;font-size:11.9px;line-height:11.9px;color:#000;white-space:pre;font-weight:bold;transform:scaleX(1.0565);transform-origin:left top;left:24px;top:640.53px;">P0130003</span>
<span class="t" style="font-family:'Liberation Sans',sans-serif;font-size:11.9px;line-height:11.9px;color:#000;white-space:pre;font-weight:bold;transform:scaleX(0.9811);transform-origin:left top;left:86px;top:640.53px;">5</span>
<span class="t" style="font-family:'Liberation Sans',sans-serif;font-size:11.9px;line-height:11.9px;color:#000;white-space:pre;font-weight:bold;transform:scaleX(1.0859);transform-origin:left top;left:96.5px;top:640.53px;">2267.1</span>
<span class="t" style="font-family:'Liberation Sans',sans-serif;font-size:11.9px;line-height:11.9px;color:#000;white-space:pre;font-weight:bold;transform:scaleX(1.0447);transform-origin:left top;left:146px;top:640.53px;">2103.1</span>
<span class="t" style="font-family:'Liberation Sans',sans-serif;font-size:11.9px;line-height:11.9px;color:#000;white-space:pre;font-weight:bold;transform:scaleX(1.0079);transform-origin:left top;left:198.5px;top:640.53px;">.2</span>
<span class="t" style="font-family:'Liberation Sans',sans-serif;font-size:11.9px;line-height:11.9px;color:#000;white-space:pre;font-weight:bold;transform:scaleX(1.0919);transform-origin:left top;left:212.5px;top:640.53px;">7.845</span>
<span class="t" style="font-family:'Liberation Sans',sans-serif;font-size:11.9px;line-height:11.9px;color:#000;white-space:pre;font-weight:bold;transform:scaleX(1.1255);transform-origin:left top;left:249px;top:640.53px;">5.881</span>
<span class="t" style="font-family:'Liberation Sans',sans-serif;font-size:11.9px;line-height:11.9px;color:#000;white-space:pre;font-weight:bold;transform:scaleX(1.0079);transform-origin:left top;left:295px;top:640.53px;">.3520</span>
<span class="t" style="font-family:'Liberation Sans',sans-serif;font-size:11.9px;line-height:11.9px;color:#000;white-space:pre;font-weight:bold;transform:scaleX(1.0919);transform-origin:left top;left:336px;top:640.53px;">19.86</span>
<span class="t" style="font-family:'Liberation Sans',sans-serif;font-size:11.9px;line-height:11.9px;color:#000;white-space:pre;font-weight:bold;transform:scaleX(1.0919);transform-origin:left top;left:376.5px;top:640.53px;">24.00</span>
<span class="t" style="font-family:'Liberation Sans',sans-serif;font-size:11.9px;line-height:11.9px;color:#000;white-space:pre;font-weight:bold;transform:scaleX(1.0722);transform-origin:left top;left:414px;top:640.53px;">33.745</span>
<span class="t" style="font-family:'Liberation Sans',sans-serif;font-size:11.9px;line-height:11.9px;color:#000;white-space:pre;font-weight:bold;transform:scaleX(0.9811);transform-origin:left top;left:467.5px;top:640.53px;">3</span>
<span class="t" style="font-family:'Liberation Sans',sans-serif;font-size:11.9px;line-height:11.9px;color:#000;white-space:pre;font-weight:bold;transform:scaleX(1.0859);transform-origin:left top;left:477.5px;top:640.53px;">123.66</span>
<span class="t" style="font-family:'Liberation Sans',sans-serif;font-size:11.9px;line-height:11.9px;color:#000;white-space:pre;font-weight:bold;transform:scaleX(1.0565);transform-origin:left top;left:24px;top:653.63px;">P0130005</span>
<span class="t" style="font-family:'Liberation Sans',sans-serif;font-size:11.9px;line-height:11.9px;color:#000;white-space:pre;font-weight:bold;transform:scaleX(0.9811);transform-origin:left top;left:86px;top:653.63px;">5</span>
<span class="t" style="font-family:'Liberation Sans',sans-serif;font-size:11.9px;line-height:11.9px;color:#000;white-space:pre;font-weight:bold;transform:scaleX(1.0859);transform-origin:left top;left:96.5px;top:653.63px;">2274.1</span>
<span class="t" style="font-family:'Liberation Sans',sans-serif;font-size:11.9px;line-height:11.9px;color:#000;white-space:pre;font-weight:bold;transform:scaleX(1.0447);transform-origin:left top;left:146px;top:653.63px;">2104.3</span>
<span class="t" style="font-family:'Liberation Sans',sans-serif;font-size:11.9px;line-height:11.9px;color:#000;white-space:pre;font-weight:bold;transform:scaleX(1.0079);transform-origin:left top;left:198.5px;top:653.63px;">.3</span>
<span class="t" style="font-family:'Liberation Sans',sans-serif;font-size:11.9px;line-height:11.9px;color:#000;white-space:pre;font-weight:bold;transform:scaleX(1.0919);transform-origin:left top;left:212.5px;top:653.63px;">7.857</span>
<span class="t" style="font-family:'Liberation Sans',sans-serif;font-size:11.9px;line-height:11.9px;color:#000;white-space:pre;font-weight:bold;transform:scaleX(1.1255);transform-origin:left top;left:249px;top:653.63px;">5.879</span>
<span class="t" style="font-family:'Liberation Sans',sans-serif;font-size:11.9px;line-height:11.9px;color:#000;white-space:pre;font-weight:bold;transform:scaleX(1.0079);transform-origin:left top;left:295px;top:653.63px;">.3520</span>
<span class="t" style="font-family:'Liberation Sans',sans-serif;font-size:11.9px;line-height:11.9px;color:#000;white-space:pre;font-weight:bold;transform:scaleX(1.0919);transform-origin:left top;left:336px;top:653.63px;">19.90</span>
<span class="t" style="font-family:'Liberation Sans',sans-serif;font-size:11.9px;line-height:11.9px;color:#000;white-space:pre;font-weight:bold;transform:scaleX(1.0919);transform-origin:left top;left:376.5px;top:653.63px;">24.00</span>
<span class="t" style="font-family:'Liberation Sans',sans-serif;font-size:11.9px;line-height:11.9px;color:#000;white-space:pre;font-weight:bold;transform:scaleX(1.0722);transform-origin:left top;left:414px;top:653.63px;">33.645</span>
<span class="t" style="font-family:'Liberation Sans',sans-serif;font-size:11.9px;line-height:11.9px;color:#000;white-space:pre;font-weight:bold;transform:scaleX(0.9811);transform-origin:left top;left:467.5px;top:653.63px;">3</span>
<span class="t" style="font-family:'Liberation Sans',sans-serif;font-size:11.9px;line-height:11.9px;color:#000;white-space:pre;font-weight:bold;transform:scaleX(1.0859);transform-origin:left top;left:477.5px;top:653.63px;">123.66</span>
<div style="left:679px;top:608px;width:132px;height:42px;background:#66ff00;"></div>
<span class="t" style="font-family:'Liberation Sans',sans-serif;font-size:12.5px;line-height:12.5px;color:#000;white-space:pre;font-weight:bold;transform:scaleX(0.9674);transform-origin:left top;left:681px;top:610.12px;">Nbre de dosages pou-</span>
<span class="t" style="font-family:'Liberation Sans',sans-serif;font-size:12.5px;line-height:12.5px;color:#000;white-space:pre;font-weight:bold;transform:scaleX(0.9704);transform-origin:left top;left:681px;top:622.92px;">vant encore être mis</span>
<span class="t" style="font-family:'Liberation Sans',sans-serif;font-size:12.5px;line-height:12.5px;color:#000;white-space:pre;font-weight:bold;transform:scaleX(0.9497);transform-origin:left top;left:681px;top:635.72px;">sur la disquette :</span>
<div style="left:690px;top:652px;width:86px;height:26px;background:#c0c0c0;"></div>
<div style="left:690px;top:652px;width:86px;height:1px;background:#e8e8e8;"></div>
<div style="left:690px;top:652px;width:1px;height:26px;background:#e8e8e8;"></div>
<div style="left:690px;top:677px;width:86px;height:1px;background:#808080;"></div>
<div style="left:775px;top:652px;width:1px;height:26px;background:#808080;"></div>
<div style="left:693px;top:655px;width:80px;height:20px;background:#66ff00;"></div>
<div style="left:692px;top:654px;width:81px;height:1px;background:#808080;"></div>
<div style="left:692px;top:654px;width:1px;height:21px;background:#808080;"></div>
<span class="t" style="font-family:'Liberation Sans',sans-serif;font-size:16.5px;line-height:16.5px;color:#ff6600;white-space:pre;transform:scaleX(1.1115);transform-origin:left top;left:740px;top:656.33px;-webkit-text-stroke:0.4px #ff6600;">445</span>
<div style="left:7px;top:724px;width:1000px;height:16px;background:#cacaca;"></div>
<div style="left:7px;top:738px;width:1000px;height:1px;background:#fff;"></div>
<div style="left:7px;top:739px;width:1000px;height:1px;background:#808080;"></div>
<div style="left:7px;top:724px;width:17px;height:16px;background:#cccccc;"></div>
<div style="left:7px;top:724px;width:16px;height:1px;background:#fff;"></div>
<div style="left:7px;top:724px;width:1px;height:15px;background:#fff;"></div>
<div style="left:8px;top:725px;width:15px;height:1px;background:#fff;"></div>
<div style="left:8px;top:725px;width:1px;height:14px;background:#fff;"></div>
<div style="left:7px;top:739px;width:17px;height:1px;background:#000;"></div>
<div style="left:23px;top:724px;width:1px;height:16px;background:#000;"></div>
<svg style="left:0;top:0" width="1016" height="748"><polygon points="17,728.5 17,735.5 13,732" fill="#000"/></svg>
<div style="left:184px;top:724px;width:627px;height:16px;background:#d0d0d0;"></div>
<div style="left:184px;top:724px;width:626px;height:1px;background:#fff;"></div>
<div style="left:184px;top:724px;width:1px;height:15px;background:#fff;"></div>
<div style="left:184px;top:739px;width:627px;height:1px;background:#000;"></div>
<div style="left:810px;top:724px;width:1px;height:16px;background:#000;"></div>
<div style="left:822px;top:581px;width:191px;height:169px;background:#c0c0c0;"></div>
<div style="left:822px;top:749px;width:191px;height:1px;background:#000;"></div>
<div style="left:1012px;top:581px;width:1px;height:169px;background:#000;"></div>
<div style="left:823px;top:748px;width:189px;height:1px;background:#808080;"></div>
<div style="left:1011px;top:582px;width:1px;height:167px;background:#808080;"></div>
<div style="left:823px;top:582px;width:188px;height:1px;background:#fff;"></div>
<div style="left:823px;top:582px;width:1px;height:166px;background:#fff;"></div>
<div style="left:826px;top:604px;width:182px;height:1px;background:#808080;"></div>
<div style="left:826px;top:604px;width:1px;height:141px;background:#808080;"></div>
<div style="left:827px;top:605px;width:180px;height:1px;background:#000;"></div>
<div style="left:827px;top:605px;width:1px;height:139px;background:#000;"></div>
<div style="left:827px;top:745px;width:182px;height:1px;background:#fff;"></div>
<div style="left:1008px;top:605px;width:1px;height:141px;background:#fff;"></div>
<div style="left:828px;top:605px;width:179px;height:18px;background:#cccccc;"></div>
<div style="left:828px;top:623px;width:179px;height:1px;background:#808080;"></div>
<div style="left:828px;top:624px;width:179px;height:1px;background:#fff;"></div>
<span class="t" style="font-family:'Liberation Sans',sans-serif;font-size:12px;line-height:12px;color:#000;white-space:pre;-webkit-text-stroke:0.3px #000;transform:scaleX(0.8382);transform-origin:left top;left:834.6px;top:609.14px;"><u>F</u>ichier</span>
<span class="t" style="font-family:'Liberation Sans',sans-serif;font-size:12px;line-height:12px;color:#000;white-space:pre;-webkit-text-stroke:0.3px #000;transform:scaleX(0.8828);transform-origin:left top;left:877.6px;top:609.14px;"><u>E</u>dition</span>
<span class="t" style="font-family:'Liberation Sans',sans-serif;font-size:12px;line-height:12px;color:#000;white-space:pre;-webkit-text-stroke:0.3px #000;transform:scaleX(0.9029);transform-origin:left top;left:921.7px;top:609.14px;"><u>E</u>xécution</span>
<div style="left:828px;top:625px;width:179px;height:22px;background:#e4e4e4;"></div>
<div style="left:828px;top:647px;width:179px;height:1px;background:#000;"></div>
<div style="left:971px;top:605px;width:1px;height:42px;background:#000;"></div>
<div style="left:972px;top:605px;width:35px;height:42px;background:#fff;"></div>
<svg style="left:973px;top:610px" width="33" height="33" viewBox="0 0 33 33" shape-rendering="crispEdges"><rect x="0.5" y="0.5" width="31" height="31" fill="#fff" stroke="#000"/><rect x="2.5" y="2.5" width="19" height="13" fill="#fff" stroke="#000"/><path d="M4 4h2v2h-2zM7 4h2v2h-2zM10 4h2v2h-2zM16 4h4v2h-4z" fill="#000"/><rect x="4" y="7" width="11" height="5" fill="#000"/><path d="M5 10h1v1h-1zM6 8h1v2h-1zM7 8h1v1h-1zM8 9h1v2h-1zM9 10h1v1h-1zM10 8h1v2h-1zM11 8h1v1h-1zM12 9h1v2h-1zM13 10h1v1h-1z" fill="#fff"/><path d="M16 7h4v1h-4zM19 8h1v2h-1zM16 10h4v1h-4z" fill="#000"/><path d="M4 13h5v1h-5zM10 13h1v1h-1zM12 13h3v1h-3z" fill="#000"/><rect x="16" y="11" width="6" height="5" fill="#fff"/><polygon points="19.500,12.500 19.500,22.500 27,17.500" fill="#fff" stroke="#000" shape-rendering="geometricPrecision"/><path d="M16 11h3v1h-3zM16 15h3v1h-3zM16 19h3v1h-3zM27 17h3v1h-3z" fill="#000"/><path d="M21 17h3v1h-3zM22 16h1v3h-1z" fill="#000"/><text x="8" y="27" font-family="Liberation Sans,sans-serif" font-size="9" fill="#000">3</text></svg>
<svg style="left:859px;top:629px" width="16" height="14" viewBox="0 0 16 14" shape-rendering="crispEdges"><path d="M0 4h1v6h-1zM2 4h1v6h-1zM4 0h1v3h-1zM6 0h1v3h-1zM4 11h1v3h-1zM6 11h1v3h-1z" fill="#000"/><polygon points="4,4 9,4 9,0 16,7 9,14 9,10 4,10" fill="#000"/><path d="M5 6.5h6v1h-6z" fill="#fff"/><path d="M9 5h1v4h-1zM10 6h1v2h-1z" fill="#fff"/></svg>
<div style="left:901px;top:626px;width:18px;height:17px;border:1px solid #000;border-radius:2.5px;background:#dedede;box-shadow:inset 1px 1px 0 #fff, inset -1px -1px 0 #999;"></div>
<svg style="left:0;top:0" width="1016" height="748" viewBox="0 0 1016 748"><defs><pattern id="dr901" width="2" height="2" patternUnits="userSpaceOnUse"><rect width="2" height="2" fill="#f01010"/><rect x="0" y="0" width="1" height="1" fill="#a00000"/></pattern></defs><polygon points="917.72,638.21 913.61,642.32 907.79,642.32 903.68,638.21 903.68,632.39 907.79,628.28 913.61,628.28 917.72,632.39" fill="#fff" stroke="#000" stroke-width="1"/><polygon points="915.87,637.44 912.84,640.47 908.56,640.47 905.53,637.44 905.53,633.16 908.56,630.13 912.84,630.13 915.87,633.16" fill="url(#dr901)" stroke="#b00000" stroke-width="0.8"/></svg>
<div style="left:920px;top:626px;width:19px;height:17px;border:1px solid #000;border-radius:2.5px;background:#dedede;box-shadow:inset 1px 1px 0 #fff, inset -1px -1px 0 #000;"></div>
<div style="left:927px;top:630px;width:3px;height:10px;background:#000;"></div>
<div style="left:932px;top:630px;width:3px;height:10px;background:#000;"></div>
<div style="left:828px;top:648px;width:164px;height:81px;background:#33ffcc;"></div>
<span class="t" style="font-family:'Liberation Sans',sans-serif;font-size:17.5px;line-height:17.5px;color:#000;white-space:pre;transform:scaleX(1.1336);transform-origin:left top;left:848px;top:649.79px;">Temp. Cellule</span>
<div style="left:835px;top:665px;width:153px;height:63px;background:#a6b3a6;"></div>
<div style="left:835px;top:665px;width:153px;height:1px;background:#d9e6d9;"></div>
<div style="left:835px;top:665px;width:1px;height:63px;background:#d9e6d9;"></div>
<div style="left:835px;top:727px;width:153px;height:1px;background:#808080;"></div>
<div style="left:987px;top:665px;width:1px;height:63px;background:#808080;"></div>
<div style="left:837px;top:667px;width:149px;height:59px;background:#808080;"></div>
<div style="left:838px;top:668px;width:148px;height:58px;background:#00ff00;"></div>
<div style="left:838px;top:725px;width:148px;height:1px;background:#b3ccb3;"></div>
<div style="left:985px;top:668px;width:1px;height:58px;background:#b3ccb3;"></div>
<span class="t" style="font-family:'Liberation Serif',serif;font-size:50.5px;line-height:50.5px;color:#ff0000;white-space:pre;font-weight:bold;transform:scaleX(1.1001);transform-origin:left top;left:857.8px;top:670.91px;-webkit-text-stroke:1px #ff0000;">19.88</span>
<div style="left:992px;top:648px;width:15px;height:81px;background:#cacaca;"></div>
<div style="left:1005px;top:648px;width:1px;height:81px;background:#fff;"></div>
<div style="left:1006px;top:648px;width:1px;height:81px;background:#808080;"></div>
<div style="left:992px;top:674px;width:15px;height:15px;background:#d0d0d0;"></div>
<div style="left:992px;top:674px;width:14px;height:1px;background:#fff;"></div>
<div style="left:992px;top:674px;width:1px;height:14px;background:#fff;"></div>
<div style="left:992px;top:688px;width:15px;height:1px;background:#000;"></div>
<div style="left:1006px;top:674px;width:1px;height:15px;background:#000;"></div>
<div style="left:992px;top:648px;width:15px;height:15px;background:#cccccc;"></div>
<div style="left:992px;top:648px;width:14px;height:1px;background:#fff;"></div>
<div style="left:992px;top:648px;width:1px;height:14px;background:#fff;"></div>
<div style="left:993px;top:649px;width:13px;height:1px;background:#fff;"></div>
<div style="left:993px;top:649px;width:1px;height:13px;background:#fff;"></div>
<div style="left:992px;top:662px;width:15px;height:1px;background:#000;"></div>
<div style="left:1006px;top:648px;width:1px;height:15px;background:#000;"></div>
<svg style="left:0;top:0" width="1016" height="748"><polygon points="995.5,657 1002.5,657 999,653" fill="#000"/></svg>
<div style="left:992px;top:714px;width:15px;height:15px;background:#cccccc;"></div>
<div style="left:992px;top:714px;width:14px;height:1px;background:#fff;"></div>
<div style="left:992px;top:714px;width:1px;height:14px;background:#fff;"></div>
<div style="left:993px;top:715px;width:13px;height:1px;background:#fff;"></div>
<div style="left:993px;top:715px;width:1px;height:13px;background:#fff;"></div>
<div style="left:992px;top:728px;width:15px;height:1px;background:#000;"></div>
<div style="left:1006px;top:714px;width:1px;height:15px;background:#000;"></div>
<svg style="left:0;top:0" width="1016" height="748"><polygon points="995.5,720 1002.5,720 999,724" fill="#000"/></svg>
<div style="left:828px;top:729px;width:164px;height:15px;background:#cacaca;"></div>
<div style="left:828px;top:742px;width:164px;height:1px;background:#fff;"></div>
<div style="left:828px;top:743px;width:164px;height:1px;background:#808080;"></div>
<div style="left:828px;top:729px;width:17px;height:15px;background:#cccccc;"></div>
<div style="left:828px;top:729px;width:16px;height:1px;background:#fff;"></div>
<div style="left:828px;top:729px;width:1px;height:14px;background:#fff;"></div>
<div style="left:829px;top:730px;width:15px;height:1px;background:#fff;"></div>
<div style="left:829px;top:730px;width:1px;height:13px;background:#fff;"></div>
<div style="left:828px;top:743px;width:17px;height:1px;background:#000;"></div>
<div style="left:844px;top:729px;width:1px;height:15px;background:#000;"></div>
<svg style="left:0;top:0" width="1016" height="748"><polygon points="838,732.5 838,739.5 834,736" fill="#000"/></svg>
<div style="left:851px;top:729px;width:24px;height:15px;background:#d0d0d0;"></div>
<div style="left:851px;top:729px;width:23px;height:1px;background:#fff;"></div>
<div style="left:851px;top:729px;width:1px;height:14px;background:#fff;"></div>
<div style="left:851px;top:743px;width:24px;height:1px;background:#000;"></div>
<div style="left:874px;top:729px;width:1px;height:15px;background:#000;"></div>
<div style="left:977px;top:729px;width:15px;height:15px;background:#cccccc;"></div>
<div style="left:977px;top:729px;width:14px;height:1px;background:#fff;"></div>
<div style="left:977px;top:729px;width:1px;height:14px;background:#fff;"></div>
<div style="left:978px;top:730px;width:13px;height:1px;background:#fff;"></div>
<div style="left:978px;top:730px;width:1px;height:13px;background:#fff;"></div>
<div style="left:977px;top:743px;width:15px;height:1px;background:#000;"></div>
<div style="left:991px;top:729px;width:1px;height:15px;background:#000;"></div>
<svg style="left:0;top:0" width="1016" height="748"><polygon points="983,732.5 983,739.5 987,736" fill="#000"/></svg>
<div style="left:992px;top:729px;width:15px;height:15px;background:#cccccc;"></div>
<svg style="left:992px;top:729px" width="15" height="15" viewBox="0 0 15 15"><path d="M11 14L14 11" stroke="#fff" stroke-width="1"/><path d="M12 14L14 12" stroke="#808080" stroke-width="1.4"/><path d="M7 14L14 7" stroke="#fff" stroke-width="1"/><path d="M8 14L14 8" stroke="#808080" stroke-width="1.4"/><path d="M3 14L14 3" stroke="#fff" stroke-width="1"/><path d="M4 14L14 4" stroke="#808080" stroke-width="1.4"/></svg>
<div style="left:619px;top:462px;width:394px;height:147px;background:#c0c0c0;"></div>
<div style="left:619px;top:608px;width:394px;height:1px;background:#000;"></div>
<div style="left:1012px;top:462px;width:1px;height:147px;background:#000;"></div>
<div style="left:620px;top:607px;width:392px;height:1px;background:#808080;"></div>
<div style="left:1011px;top:463px;width:1px;height:145px;background:#808080;"></div>
<div style="left:620px;top:463px;width:391px;height:1px;background:#fff;"></div>
<div style="left:620px;top:463px;width:1px;height:144px;background:#fff;"></div>
<div style="left:623px;top:485px;width:385px;height:1px;background:#808080;"></div>
<div style="left:623px;top:485px;width:1px;height:119px;background:#808080;"></div>
<div style="left:624px;top:486px;width:383px;height:1px;background:#000;"></div>
<div style="left:624px;top:486px;width:1px;height:117px;background:#000;"></div>
<div style="left:624px;top:604px;width:385px;height:1px;background:#fff;"></div>
<div style="left:1008px;top:486px;width:1px;height:119px;background:#fff;"></div>
<div style="left:625px;top:487px;width:367px;height:100px;background:#66ffcc;"></div>
<span class="t" style="font-family:'Liberation Sans',sans-serif;font-size:18px;line-height:18px;color:#000;white-space:pre;transform:scaleX(1.0991);transform-origin:left top;left:709px;top:491.26px;">Volume</span>
<span class="t" style="font-family:'Liberation Sans',sans-serif;font-size:18.5px;line-height:18.5px;color:#000;white-space:pre;transform:scaleX(1.0056);transform-origin:left top;left:873.6px;top:494.14px;">Potentiel</span>
<div style="left:633px;top:514px;width:197px;height:63px;background:#a6b3a6;"></div>
<div style="left:633px;top:514px;width:197px;height:1px;background:#d9e6d9;"></div>
<div style="left:633px;top:514px;width:1px;height:63px;background:#d9e6d9;"></div>
<div style="left:633px;top:576px;width:197px;height:1px;background:#808080;"></div>
<div style="left:829px;top:514px;width:1px;height:63px;background:#808080;"></div>
<div style="left:635px;top:516px;width:193px;height:59px;background:#808080;"></div>
<div style="left:636px;top:517px;width:192px;height:58px;background:#00ff00;"></div>
<div style="left:636px;top:574px;width:192px;height:1px;background:#b3ccb3;"></div>
<div style="left:827px;top:517px;width:1px;height:58px;background:#b3ccb3;"></div>
<div style="left:834px;top:514px;width:154px;height:63px;background:#a6b3a6;"></div>
<div style="left:834px;top:514px;width:154px;height:1px;background:#d9e6d9;"></div>
<div style="left:834px;top:514px;width:1px;height:63px;background:#d9e6d9;"></div>
<div style="left:834px;top:576px;width:154px;height:1px;background:#808080;"></div>
<div style="left:987px;top:514px;width:1px;height:63px;background:#808080;"></div>
<div style="left:836px;top:516px;width:150px;height:59px;background:#808080;"></div>
<div style="left:837px;top:517px;width:149px;height:58px;background:#00ff00;"></div>
<div style="left:837px;top:574px;width:149px;height:1px;background:#b3ccb3;"></div>
<div style="left:985px;top:517px;width:1px;height:58px;background:#b3ccb3;"></div>
<span class="t" style="font-family:'Liberation Serif',serif;font-size:49.5px;line-height:49.5px;color:#ff0000;white-space:pre;font-weight:bold;transform:scaleX(1.1282);transform-origin:left top;left:642.8px;top:521.84px;-webkit-text-stroke:1px #ff0000;">1.56250</span>
<span class="t" style="font-family:'Liberation Serif',serif;font-size:51px;line-height:51px;color:#ff0000;white-space:pre;font-weight:bold;transform:scaleX(1.0712);transform-origin:left top;left:868.2px;top:520.09px;-webkit-text-stroke:1px #ff0000;">-13.5</span>
<div style="left:992px;top:487px;width:15px;height:100px;background:#cacaca;"></div>
<div style="left:1005px;top:487px;width:1px;height:100px;background:#fff;"></div>
<div style="left:1006px;top:487px;width:1px;height:100px;background:#808080;"></div>
<div style="left:992px;top:554px;width:15px;height:15px;background:#d0d0d0;"></div>
<div style="left:992px;top:554px;width:14px;height:1px;background:#fff;"></div>
<div style="left:992px;top:554px;width:1px;height:14px;background:#fff;"></div>
<div style="left:992px;top:568px;width:15px;height:1px;background:#000;"></div>
<div style="left:1006px;top:554px;width:1px;height:15px;background:#000;"></div>
<div style="left:992px;top:487px;width:15px;height:16px;background:#cccccc;"></div>
<div style="left:992px;top:487px;width:14px;height:1px;background:#fff;"></div>
<div style="left:992px;top:487px;width:1px;height:15px;background:#fff;"></div>
<div style="left:993px;top:488px;width:13px;height:1px;background:#fff;"></div>
<div style="left:993px;top:488px;width:1px;height:14px;background:#fff;"></div>
<div style="left:992px;top:502px;width:15px;height:1px;background:#000;"></div>
<div style="left:1006px;top:487px;width:1px;height:16px;background:#000;"></div>
<svg style="left:0;top:0" width="1016" height="748"><polygon points="995.5,497 1002.5,497 999,493" fill="#000"/></svg>
<div style="left:992px;top:572px;width:15px;height:15px;background:#cccccc;"></div>
<div style="left:992px;top:572px;width:14px;height:1px;background:#fff;"></div>
<div style="left:992px;top:572px;width:1px;height:14px;background:#fff;"></div>
<div style="left:993px;top:573px;width:13px;height:1px;background:#fff;"></div>
<div style="left:993px;top:573px;width:1px;height:13px;background:#fff;"></div>
<div style="left:992px;top:586px;width:15px;height:1px;background:#000;"></div>
<div style="left:1006px;top:572px;width:1px;height:15px;background:#000;"></div>
<svg style="left:0;top:0" width="1016" height="748"><polygon points="995.5,578 1002.5,578 999,582" fill="#000"/></svg>
<div style="left:625px;top:587px;width:367px;height:16px;background:#cacaca;"></div>
<div style="left:625px;top:601px;width:367px;height:1px;background:#fff;"></div>
<div style="left:625px;top:602px;width:367px;height:1px;background:#808080;"></div>
<div style="left:625px;top:587px;width:17px;height:16px;background:#cccccc;"></div>
<div style="left:625px;top:587px;width:16px;height:1px;background:#fff;"></div>
<div style="left:625px;top:587px;width:1px;height:15px;background:#fff;"></div>
<div style="left:626px;top:588px;width:15px;height:1px;background:#fff;"></div>
<div style="left:626px;top:588px;width:1px;height:14px;background:#fff;"></div>
<div style="left:625px;top:602px;width:17px;height:1px;background:#000;"></div>
<div style="left:641px;top:587px;width:1px;height:16px;background:#000;"></div>
<svg style="left:0;top:0" width="1016" height="748"><polygon points="635,591.5 635,598.5 631,595" fill="#000"/></svg>
<div style="left:688px;top:587px;width:156px;height:16px;background:#d0d0d0;"></div>
<div style="left:688px;top:587px;width:155px;height:1px;background:#fff;"></div>
<div style="left:688px;top:587px;width:1px;height:15px;background:#fff;"></div>
<div style="left:688px;top:602px;width:156px;height:1px;background:#000;"></div>
<div style="left:843px;top:587px;width:1px;height:16px;background:#000;"></div>
<div style="left:977px;top:587px;width:15px;height:16px;background:#cccccc;"></div>
<div style="left:977px;top:587px;width:14px;height:1px;background:#fff;"></div>
<div style="left:977px;top:587px;width:1px;height:15px;background:#fff;"></div>
<div style="left:978px;top:588px;width:13px;height:1px;background:#fff;"></div>
<div style="left:978px;top:588px;width:1px;height:14px;background:#fff;"></div>
<div style="left:977px;top:602px;width:15px;height:1px;background:#000;"></div>
<div style="left:991px;top:587px;width:1px;height:16px;background:#000;"></div>
<svg style="left:0;top:0" width="1016" height="748"><polygon points="983,591.5 983,598.5 987,595" fill="#000"/></svg>
<div style="left:992px;top:587px;width:15px;height:16px;background:#cccccc;"></div>
<svg style="left:992px;top:587px" width="15" height="16" viewBox="0 0 15 16"><path d="M11 15L14 12" stroke="#fff" stroke-width="1"/><path d="M12 15L14 13" stroke="#808080" stroke-width="1.4"/><path d="M7 15L14 8" stroke="#fff" stroke-width="1"/><path d="M8 15L14 9" stroke="#808080" stroke-width="1.4"/><path d="M3 15L14 4" stroke="#fff" stroke-width="1"/><path d="M4 15L14 5" stroke="#808080" stroke-width="1.4"/></svg>
<div style="left:81px;top:24px;width:468px;height:487px;background:#c0c0c0;"></div>
<div style="left:81px;top:510px;width:468px;height:1px;background:#000;"></div>
<div style="left:548px;top:24px;width:1px;height:487px;background:#000;"></div>
<div style="left:82px;top:509px;width:466px;height:1px;background:#808080;"></div>
<div style="left:547px;top:25px;width:1px;height:485px;background:#808080;"></div>
<div style="left:82px;top:25px;width:465px;height:1px;background:#fff;"></div>
<div style="left:82px;top:25px;width:1px;height:484px;background:#fff;"></div>
<div style="left:85px;top:28px;width:459px;height:18px;background:#808080;"></div>
<svg style="left:87px;top:29px" width="18" height="16" viewBox="0 0 18 16" shape-rendering="crispEdges"><rect width="16" height="16" fill="#000"/><rect x="1" y="1" width="1" height="14" fill="#fff"/><rect x="0" y="5" width="2" height="1" fill="#f00"/><rect x="0" y="11" width="2" height="1" fill="#00f"/><path d="M3 1h1v1h-1zM5 1h1v1h-1zM7 1h1v1h-1zM9 1h1v1h-1zM11 1h1v1h-1zM4 2h9v1h-9zM13 1h1v6h-1zM13 10h1v5h-1zM4 13h9v1h-9zM3 14h1v1h-1zM5 14h1v1h-1zM7 14h1v1h-1zM9 14h1v1h-1zM11 14h1v1h-1z" fill="#e0e0e0"/><polygon points="3,3 13,8.5 3,14" fill="#ff0"/><path d="M6 4h1v1h-1zM4 6h1v1h-1zM8 6h1v1h-1zM5 11h1v1h-1zM9 9h1v1h-1zM4 10h1v1h-1z" fill="#fff"/><rect x="4" y="8" width="5" height="1" fill="#000"/><rect x="6" y="6" width="1" height="5" fill="#000"/><rect x="13" y="8" width="4" height="1" fill="#f00"/></svg>
<span class="t" style="font-family:'Liberation Sans',sans-serif;font-size:12px;line-height:12px;color:#c0c0c0;white-space:pre;font-weight:bold;letter-spacing:-0.053px;left:107px;top:30.84px;">ContrDosage.vi</span>
<div style="left:526px;top:30px;width:16px;height:14px;background:#c0c0c0;"></div>
<div style="left:526px;top:30px;width:15px;height:1px;background:#fff;"></div>
<div style="left:526px;top:30px;width:1px;height:13px;background:#fff;"></div>
<div style="left:526px;top:43px;width:16px;height:1px;background:#000;"></div>
<div style="left:541px;top:30px;width:1px;height:14px;background:#000;"></div>
<div style="left:527px;top:42px;width:14px;height:1px;background:#808080;"></div>
<div style="left:540px;top:31px;width:1px;height:12px;background:#808080;"></div>
<svg style="left:530px;top:33px" width="8" height="7" viewBox="0 0 8 7" shape-rendering="crispEdges"><path d="M0 0h2v1h-2zM6 0h2v1h-2zM1 1h2v1h-2zM5 1h2v1h-2zM2 2h4v1h-4zM3 3h2v1h-2zM2 4h4v1h-4zM1 5h2v1h-2zM5 5h2v1h-2zM0 6h2v1h-2zM6 6h2v1h-2z" fill="#000"/></svg>
<div style="left:508px;top:30px;width:16px;height:14px;background:#c0c0c0;"></div>
<div style="left:508px;top:30px;width:15px;height:1px;background:#fff;"></div>
<div style="left:508px;top:30px;width:1px;height:13px;background:#fff;"></div>
<div style="left:508px;top:43px;width:16px;height:1px;background:#000;"></div>
<div style="left:523px;top:30px;width:1px;height:14px;background:#000;"></div>
<div style="left:509px;top:42px;width:14px;height:1px;background:#808080;"></div>
<div style="left:522px;top:31px;width:1px;height:12px;background:#808080;"></div>
<div style="left:511px;top:32px;width:9px;height:9px;background:#000;"></div>
<div style="left:512px;top:34px;width:7px;height:6px;background:#c0c0c0;"></div>
<div style="left:491px;top:30px;width:16px;height:14px;background:#c0c0c0;"></div>
<div style="left:491px;top:30px;width:15px;height:1px;background:#fff;"></div>
<div style="left:491px;top:30px;width:1px;height:13px;background:#fff;"></div>
<div style="left:491px;top:43px;width:16px;height:1px;background:#000;"></div>
<div style="left:506px;top:30px;width:1px;height:14px;background:#000;"></div>
<div style="left:492px;top:42px;width:14px;height:1px;background:#808080;"></div>
<div style="left:505px;top:31px;width:1px;height:12px;background:#808080;"></div>
<div style="left:495px;top:39px;width:6px;height:2px;background:#000;"></div>
<div style="left:85px;top:47px;width:459px;height:1px;background:#808080;"></div>
<div style="left:85px;top:47px;width:1px;height:459px;background:#808080;"></div>
<div style="left:86px;top:48px;width:457px;height:1px;background:#000;"></div>
<div style="left:86px;top:48px;width:1px;height:457px;background:#000;"></div>
<div style="left:86px;top:506px;width:459px;height:1px;background:#fff;"></div>
<div style="left:544px;top:48px;width:1px;height:459px;background:#fff;"></div>
<div style="left:87px;top:49px;width:456px;height:18px;background:#cccccc;"></div>
<div style="left:87px;top:67px;width:456px;height:1px;background:#808080;"></div>
<div style="left:87px;top:68px;width:456px;height:1px;background:#fff;"></div>
<span class="t" style="font-family:'Liberation Sans',sans-serif;font-size:12px;line-height:12px;color:#000;white-space:pre;-webkit-text-stroke:0.3px #000;transform:scaleX(0.8715);transform-origin:left top;left:92.6px;top:51.84px;"><u>F</u>ichier</span>
<span class="t" style="font-family:'Liberation Sans',sans-serif;font-size:12px;line-height:12px;color:#000;white-space:pre;-webkit-text-stroke:0.3px #000;transform:scaleX(0.8882);transform-origin:left top;left:135.4px;top:51.84px;"><u>E</u>dition</span>
<span class="t" style="font-family:'Liberation Sans',sans-serif;font-size:12px;line-height:12px;color:#000;white-space:pre;-webkit-text-stroke:0.3px #000;transform:scaleX(0.9200);transform-origin:left top;left:179.5px;top:51.84px;"><u>E</u>xécution</span>
<span class="t" style="font-family:'Liberation Sans',sans-serif;font-size:12px;line-height:12px;color:#000;white-space:pre;-webkit-text-stroke:0.3px #000;transform:scaleX(0.8833);transform-origin:left top;left:239.3px;top:51.84px;"><u>P</u>rojet</span>
<span class="t" style="font-family:'Liberation Sans',sans-serif;font-size:12px;line-height:12px;color:#000;white-space:pre;-webkit-text-stroke:0.3px #000;transform:scaleX(0.8929);transform-origin:left top;left:278px;top:51.84px;"><u>F</u>enêtres</span>
<span class="t" style="font-family:'Liberation Sans',sans-serif;font-size:12px;line-height:12px;color:#000;white-space:pre;-webkit-text-stroke:0.3px #000;transform:scaleX(0.9321);transform-origin:left top;left:331px;top:51.84px;"><u>A</u>ide</span>
<div style="left:87px;top:69px;width:456px;height:21px;background:#e4e4e4;"></div>
<div style="left:87px;top:90px;width:456px;height:1px;background:#000;"></div>
<div style="left:507px;top:49px;width:1px;height:41px;background:#000;"></div>
<div style="left:508px;top:49px;width:35px;height:41px;background:#fff;"></div>
<svg style="left:509px;top:53px" width="33" height="33" viewBox="0 0 33 33" shape-rendering="crispEdges"><rect x="0.5" y="0.5" width="31" height="31" fill="#fff" stroke="#000"/><rect x="2.5" y="2.5" width="19" height="13" fill="#fff" stroke="#000"/><path d="M4 4h2v2h-2zM7 4h2v2h-2zM10 4h2v2h-2zM16 4h4v2h-4z" fill="#000"/><rect x="4" y="7" width="11" height="5" fill="#000"/><path d="M5 10h1v1h-1zM6 8h1v2h-1zM7 8h1v1h-1zM8 9h1v2h-1zM9 10h1v1h-1zM10 8h1v2h-1zM11 8h1v1h-1zM12 9h1v2h-1zM13 10h1v1h-1z" fill="#fff"/><path d="M16 7h4v1h-4zM19 8h1v2h-1zM16 10h4v1h-4z" fill="#000"/><path d="M4 13h5v1h-5zM10 13h1v1h-1zM12 13h3v1h-3z" fill="#000"/><rect x="16" y="11" width="6" height="5" fill="#fff"/><polygon points="19.500,12.500 19.500,22.500 27,17.500" fill="#fff" stroke="#000" shape-rendering="geometricPrecision"/><path d="M16 11h3v1h-3zM16 15h3v1h-3zM16 19h3v1h-3zM27 17h3v1h-3z" fill="#000"/><path d="M21 17h3v1h-3zM22 16h1v3h-1z" fill="#000"/></svg>
<svg style="left:117.5px;top:72px" width="16" height="14" viewBox="0 0 16 14" shape-rendering="crispEdges"><path d="M0 4h1v6h-1zM2 4h1v6h-1zM4 0h1v3h-1zM6 0h1v3h-1zM4 11h1v3h-1zM6 11h1v3h-1z" fill="#000"/><polygon points="4,4 9,4 9,0 16,7 9,14 9,10 4,10" fill="#000"/><path d="M5 6.5h6v1h-6z" fill="#fff"/><path d="M9 5h1v4h-1zM10 6h1v2h-1z" fill="#fff"/></svg>
<div style="left:160px;top:70px;width:18px;height:17px;border:1px solid #000;border-radius:2.5px;background:#dedede;box-shadow:inset 1px 1px 0 #fff, inset -1px -1px 0 #999;"></div>
<svg style="left:0;top:0" width="1016" height="748" viewBox="0 0 1016 748"><defs><pattern id="dr160" width="2" height="2" patternUnits="userSpaceOnUse"><rect width="2" height="2" fill="#f01010"/><rect x="0" y="0" width="1" height="1" fill="#a00000"/></pattern></defs><polygon points="176.72,82.21 172.61,86.32 166.79,86.32 162.68,82.21 162.68,76.39 166.79,72.28 172.61,72.28 176.72,76.39" fill="#fff" stroke="#000" stroke-width="1"/><polygon points="174.87,81.44 171.84,84.47 167.56,84.47 164.53,81.44 164.53,77.16 167.56,74.13 171.84,74.13 174.87,77.16" fill="url(#dr160)" stroke="#b00000" stroke-width="0.8"/></svg>
<div style="left:179px;top:70px;width:19px;height:17px;border:1px solid #000;border-radius:2.5px;background:#dedede;box-shadow:inset 1px 1px 0 #fff, inset -1px -1px 0 #000;"></div>
<div style="left:186px;top:74px;width:3px;height:10px;background:#000;"></div>
<div style="left:191px;top:74px;width:3px;height:10px;background:#000;"></div>
<div style="left:87px;top:91px;width:440px;height:399px;background:#00ff00;"></div>
<span class="t" style="font-family:'DejaVu Serif','Liberation Serif',serif;font-size:13.5px;line-height:13.5px;color:#000;white-space:pre;font-weight:bold;transform:scaleX(1.1196);transform-origin:left top;left:88.6px;top:110.61px;">Potentiel (mV)</span>
<div style="left:87px;top:128px;width:427px;height:1px;background:#ccffcc;"></div>
<div style="left:513px;top:128px;width:1px;height:333px;background:#003300;"></div>
<div style="left:87px;top:460px;width:427px;height:1px;background:#003300;"></div>
<div style="left:132px;top:138px;width:368px;height:300px;background:#000;"></div>
<div style="left:132px;top:437px;width:368px;height:1px;background:#e6ffe6;"></div>
<div style="left:499px;top:138px;width:1px;height:300px;background:#e6ffe6;"></div>
<div style="left:126px;top:139px;width:5px;height:1px;background:#000;"></div>
<span class="t" style="font-family:'Liberation Sans',sans-serif;font-size:11.5px;line-height:11.5px;color:#000;white-space:pre;-webkit-text-stroke:0.3px #000;right:891px;top:133.47px;">250</span>
<div style="left:132px;top:168px;width:367px;height:1px;background:#e6e600;"></div>
<div style="left:126px;top:168px;width:5px;height:1px;background:#000;"></div>
<span class="t" style="font-family:'Liberation Sans',sans-serif;font-size:11.5px;line-height:11.5px;color:#000;white-space:pre;-webkit-text-stroke:0.3px #000;right:891px;top:163.07px;">200</span>
<div style="left:132px;top:198px;width:367px;height:1px;background:#e6e600;"></div>
<div style="left:126px;top:198px;width:5px;height:1px;background:#000;"></div>
<span class="t" style="font-family:'Liberation Sans',sans-serif;font-size:11.5px;line-height:11.5px;color:#000;white-space:pre;-webkit-text-stroke:0.3px #000;right:891px;top:192.47px;">150</span>
<div style="left:132px;top:227px;width:367px;height:2px;background:#ffff33;"></div>
<div style="left:126px;top:227px;width:5px;height:1px;background:#000;"></div>
<span class="t" style="font-family:'Liberation Sans',sans-serif;font-size:11.5px;line-height:11.5px;color:#000;white-space:pre;-webkit-text-stroke:0.3px #000;right:891px;top:221.97px;">100</span>
<div style="left:132px;top:257px;width:367px;height:1px;background:#e6e600;"></div>
<div style="left:126px;top:257px;width:5px;height:1px;background:#000;"></div>
<span class="t" style="font-family:'Liberation Sans',sans-serif;font-size:11.5px;line-height:11.5px;color:#000;white-space:pre;-webkit-text-stroke:0.3px #000;right:891px;top:252.07px;">50</span>
<div style="left:132px;top:287px;width:367px;height:1px;background:#e6e600;"></div>
<div style="left:126px;top:287px;width:5px;height:1px;background:#000;"></div>
<span class="t" style="font-family:'Liberation Sans',sans-serif;font-size:11.5px;line-height:11.5px;color:#000;white-space:pre;-webkit-text-stroke:0.3px #000;right:891px;top:281.77px;">0</span>
<div style="left:132px;top:317px;width:367px;height:1px;background:#e6e600;"></div>
<div style="left:126px;top:317px;width:5px;height:1px;background:#000;"></div>
<span class="t" style="font-family:'Liberation Sans',sans-serif;font-size:11.5px;line-height:11.5px;color:#000;white-space:pre;-webkit-text-stroke:0.3px #000;right:891px;top:311.67px;">-50</span>
<div style="left:132px;top:346px;width:367px;height:1px;background:#e6e600;"></div>
<div style="left:126px;top:346px;width:5px;height:1px;background:#000;"></div>
<span class="t" style="font-family:'Liberation Sans',sans-serif;font-size:11.5px;line-height:11.5px;color:#000;white-space:pre;-webkit-text-stroke:0.3px #000;right:891px;top:341.17px;">-100</span>
<div style="left:132px;top:376px;width:367px;height:1px;background:#e6e600;"></div>
<div style="left:126px;top:376px;width:5px;height:1px;background:#000;"></div>
<span class="t" style="font-family:'Liberation Sans',sans-serif;font-size:11.5px;line-height:11.5px;color:#000;white-space:pre;-webkit-text-stroke:0.3px #000;right:891px;top:370.97px;">-150</span>
<div style="left:132px;top:405px;width:367px;height:1px;background:#e6e600;"></div>
<div style="left:126px;top:405px;width:5px;height:1px;background:#000;"></div>
<span class="t" style="font-family:'Liberation Sans',sans-serif;font-size:11.5px;line-height:11.5px;color:#000;white-space:pre;-webkit-text-stroke:0.3px #000;right:891px;top:400.37px;">-200</span>
<div style="left:126px;top:436px;width:5px;height:1px;background:#000;"></div>
<span class="t" style="font-family:'Liberation Sans',sans-serif;font-size:11.5px;line-height:11.5px;color:#000;white-space:pre;-webkit-text-stroke:0.3px #000;right:891px;top:430.47px;">-250</span>
<div style="left:132px;top:439px;width:1px;height:5px;background:#000;"></div>
<span class="t" style="font-family:'Liberation Sans',sans-serif;font-size:11.5px;line-height:11.5px;color:#000;white-space:pre;-webkit-text-stroke:0.3px #000;left:129px;top:445.87px;">0</span>
<div style="left:193px;top:138px;width:1px;height:299px;background:#e6e600;"></div>
<div style="left:193px;top:439px;width:1px;height:5px;background:#000;"></div>
<span class="t" style="font-family:'Liberation Sans',sans-serif;font-size:11.5px;line-height:11.5px;color:#000;white-space:pre;-webkit-text-stroke:0.3px #000;left:190px;top:445.87px;">1</span>
<div style="left:254px;top:138px;width:1px;height:299px;background:#e6e600;"></div>
<div style="left:254px;top:439px;width:1px;height:5px;background:#000;"></div>
<span class="t" style="font-family:'Liberation Sans',sans-serif;font-size:11.5px;line-height:11.5px;color:#000;white-space:pre;-webkit-text-stroke:0.3px #000;left:251px;top:445.87px;">2</span>
<div style="left:316px;top:138px;width:1px;height:299px;background:#e6e600;"></div>
<div style="left:316px;top:439px;width:1px;height:5px;background:#000;"></div>
<span class="t" style="font-family:'Liberation Sans',sans-serif;font-size:11.5px;line-height:11.5px;color:#000;white-space:pre;-webkit-text-stroke:0.3px #000;left:313px;top:445.87px;">3</span>
<div style="left:377px;top:138px;width:1px;height:299px;background:#e6e600;"></div>
<div style="left:377px;top:439px;width:1px;height:5px;background:#000;"></div>
<span class="t" style="font-family:'Liberation Sans',sans-serif;font-size:11.5px;line-height:11.5px;color:#000;white-space:pre;-webkit-text-stroke:0.3px #000;left:374px;top:445.87px;">4</span>
<div style="left:438px;top:138px;width:1px;height:299px;background:#e6e600;"></div>
<div style="left:438px;top:439px;width:1px;height:5px;background:#000;"></div>
<span class="t" style="font-family:'Liberation Sans',sans-serif;font-size:11.5px;line-height:11.5px;color:#000;white-space:pre;-webkit-text-stroke:0.3px #000;left:435px;top:445.87px;">5</span>
<div style="left:498px;top:439px;width:1px;height:5px;background:#000;"></div>
<span class="t" style="font-family:'Liberation Sans',sans-serif;font-size:11.5px;line-height:11.5px;color:#000;white-space:pre;-webkit-text-stroke:0.3px #000;left:495px;top:445.87px;">6</span>
<svg style="left:132px;top:138px" width="367" height="299" viewBox="132 138 367 299"><circle cx="133.1" cy="224.2" r="2.6" fill="#ff3300"/><circle cx="142.1" cy="234.6" r="2.6" fill="#ff3300"/><circle cx="152.2" cy="250.6" r="2.6" fill="#ff3300"/><circle cx="161.5" cy="261.2" r="2.6" fill="#ff3300"/><circle cx="170.5" cy="268.8" r="2.6" fill="#ff3300"/><circle cx="179.7" cy="275.3" r="2.6" fill="#ff3300"/><circle cx="190.1" cy="280.3" r="2.6" fill="#ff3300"/><circle cx="199.4" cy="284.2" r="2.6" fill="#ff3300"/><circle cx="208.4" cy="288.2" r="2.6" fill="#ff3300"/><circle cx="218.2" cy="291.3" r="2.6" fill="#ff3300"/></svg>
<span class="t" style="font-family:'DejaVu Serif','Liberation Serif',serif;font-size:13.5px;line-height:13.5px;color:#000;white-space:pre;font-weight:bold;transform:scaleX(1.0778);transform-origin:left top;left:232.8px;top:465.81px;">Volume acide (ml)</span>
<div style="left:527px;top:91px;width:16px;height:399px;background:#cacaca;"></div>
<div style="left:541px;top:91px;width:1px;height:399px;background:#fff;"></div>
<div style="left:542px;top:91px;width:1px;height:399px;background:#808080;"></div>
<div style="left:527px;top:148px;width:16px;height:185px;background:#d0d0d0;"></div>
<div style="left:527px;top:148px;width:15px;height:1px;background:#fff;"></div>
<div style="left:527px;top:148px;width:1px;height:184px;background:#fff;"></div>
<div style="left:527px;top:332px;width:16px;height:1px;background:#000;"></div>
<div style="left:542px;top:148px;width:1px;height:185px;background:#000;"></div>
<div style="left:527px;top:91px;width:16px;height:16px;background:#cccccc;"></div>
<div style="left:527px;top:91px;width:15px;height:1px;background:#fff;"></div>
<div style="left:527px;top:91px;width:1px;height:15px;background:#fff;"></div>
<div style="left:528px;top:92px;width:14px;height:1px;background:#fff;"></div>
<div style="left:528px;top:92px;width:1px;height:14px;background:#fff;"></div>
<div style="left:527px;top:106px;width:16px;height:1px;background:#000;"></div>
<div style="left:542px;top:91px;width:1px;height:16px;background:#000;"></div>
<svg style="left:0;top:0" width="1016" height="748"><polygon points="531.5,101 538.5,101 535,97" fill="#000"/></svg>
<div style="left:527px;top:474px;width:16px;height:16px;background:#cccccc;"></div>
<div style="left:527px;top:474px;width:15px;height:1px;background:#fff;"></div>
<div style="left:527px;top:474px;width:1px;height:15px;background:#fff;"></div>
<div style="left:528px;top:475px;width:14px;height:1px;background:#fff;"></div>
<div style="left:528px;top:475px;width:1px;height:14px;background:#fff;"></div>
<div style="left:527px;top:489px;width:16px;height:1px;background:#000;"></div>
<div style="left:542px;top:474px;width:1px;height:16px;background:#000;"></div>
<svg style="left:0;top:0" width="1016" height="748"><polygon points="531.5,481 538.5,481 535,485" fill="#000"/></svg>
<div style="left:87px;top:490px;width:440px;height:15px;background:#cacaca;"></div>
<div style="left:87px;top:503px;width:440px;height:1px;background:#fff;"></div>
<div style="left:87px;top:504px;width:440px;height:1px;background:#808080;"></div>
<div style="left:87px;top:490px;width:17px;height:15px;background:#cccccc;"></div>
<div style="left:87px;top:490px;width:16px;height:1px;background:#fff;"></div>
<div style="left:87px;top:490px;width:1px;height:14px;background:#fff;"></div>
<div style="left:88px;top:491px;width:15px;height:1px;background:#fff;"></div>
<div style="left:88px;top:491px;width:1px;height:13px;background:#fff;"></div>
<div style="left:87px;top:504px;width:17px;height:1px;background:#000;"></div>
<div style="left:103px;top:490px;width:1px;height:15px;background:#000;"></div>
<svg style="left:0;top:0" width="1016" height="748"><polygon points="97,493.5 97,500.5 93,497" fill="#000"/></svg>
<div style="left:162px;top:490px;width:230px;height:15px;background:#d0d0d0;"></div>
<div style="left:162px;top:490px;width:229px;height:1px;background:#fff;"></div>
<div style="left:162px;top:490px;width:1px;height:14px;background:#fff;"></div>
<div style="left:162px;top:504px;width:230px;height:1px;background:#000;"></div>
<div style="left:391px;top:490px;width:1px;height:15px;background:#000;"></div>
<div style="left:512px;top:490px;width:15px;height:15px;background:#cccccc;"></div>
<div style="left:512px;top:490px;width:14px;height:1px;background:#fff;"></div>
<div style="left:512px;top:490px;width:1px;height:14px;background:#fff;"></div>
<div style="left:513px;top:491px;width:13px;height:1px;background:#fff;"></div>
<div style="left:513px;top:491px;width:1px;height:13px;background:#fff;"></div>
<div style="left:512px;top:504px;width:15px;height:1px;background:#000;"></div>
<div style="left:526px;top:490px;width:1px;height:15px;background:#000;"></div>
<svg style="left:0;top:0" width="1016" height="748"><polygon points="518,493.5 518,500.5 522,497" fill="#000"/></svg>
<div style="left:527px;top:490px;width:16px;height:15px;background:#cccccc;"></div>
<svg style="left:527px;top:490px" width="16" height="15" viewBox="0 0 16 15"><path d="M12 14L15 11" stroke="#fff" stroke-width="1"/><path d="M13 14L15 12" stroke="#808080" stroke-width="1.4"/><path d="M8 14L15 7" stroke="#fff" stroke-width="1"/><path d="M9 14L15 8" stroke="#808080" stroke-width="1.4"/><path d="M4 14L15 3" stroke="#fff" stroke-width="1"/><path d="M5 14L15 4" stroke="#808080" stroke-width="1.4"/></svg>
<div style="left:545px;top:69px;width:471px;height:418px;background:#c0c0c0;"></div>
<div style="left:545px;top:486px;width:471px;height:1px;background:#000;"></div>
<div style="left:1015px;top:69px;width:1px;height:418px;background:#000;"></div>
<div style="left:546px;top:485px;width:469px;height:1px;background:#808080;"></div>
<div style="left:1014px;top:70px;width:1px;height:416px;background:#808080;"></div>
<div style="left:546px;top:70px;width:468px;height:1px;background:#fff;"></div>
<div style="left:546px;top:70px;width:1px;height:415px;background:#fff;"></div>
<div style="left:549px;top:73px;width:463px;height:18px;background:#000080;"></div>
<svg style="left:551px;top:74px" width="18" height="16" viewBox="0 0 18 16" shape-rendering="crispEdges"><rect width="16" height="16" fill="#000"/><rect x="1" y="1" width="1" height="14" fill="#fff"/><rect x="0" y="5" width="2" height="1" fill="#f00"/><rect x="0" y="11" width="2" height="1" fill="#00f"/><path d="M3 1h1v1h-1zM5 1h1v1h-1zM7 1h1v1h-1zM9 1h1v1h-1zM11 1h1v1h-1zM4 2h9v1h-9zM13 1h1v6h-1zM13 10h1v5h-1zM4 13h9v1h-9zM3 14h1v1h-1zM5 14h1v1h-1zM7 14h1v1h-1zM9 14h1v1h-1zM11 14h1v1h-1z" fill="#e0e0e0"/><polygon points="3,3 13,8.5 3,14" fill="#ff0"/><path d="M6 4h1v1h-1zM4 6h1v1h-1zM8 6h1v1h-1zM5 11h1v1h-1zM9 9h1v1h-1zM4 10h1v1h-1z" fill="#fff"/><rect x="4" y="8" width="5" height="1" fill="#000"/><rect x="6" y="6" width="1" height="5" fill="#000"/><rect x="13" y="8" width="4" height="1" fill="#f00"/></svg>
<span class="t" style="font-family:'Liberation Sans',sans-serif;font-size:12px;line-height:12px;color:#fff;white-space:pre;font-weight:bold;letter-spacing:0.089px;left:569.6px;top:75.84px;">GraphInst.vi</span>
<div style="left:994px;top:75px;width:16px;height:14px;background:#c0c0c0;"></div>
<div style="left:994px;top:75px;width:15px;height:1px;background:#fff;"></div>
<div style="left:994px;top:75px;width:1px;height:13px;background:#fff;"></div>
<div style="left:994px;top:88px;width:16px;height:1px;background:#000;"></div>
<div style="left:1009px;top:75px;width:1px;height:14px;background:#000;"></div>
<div style="left:995px;top:87px;width:14px;height:1px;background:#808080;"></div>
<div style="left:1008px;top:76px;width:1px;height:12px;background:#808080;"></div>
<svg style="left:998px;top:78px" width="8" height="7" viewBox="0 0 8 7" shape-rendering="crispEdges"><path d="M0 0h2v1h-2zM6 0h2v1h-2zM1 1h2v1h-2zM5 1h2v1h-2zM2 2h4v1h-4zM3 3h2v1h-2zM2 4h4v1h-4zM1 5h2v1h-2zM5 5h2v1h-2zM0 6h2v1h-2zM6 6h2v1h-2z" fill="#000"/></svg>
<div style="left:976px;top:75px;width:16px;height:14px;background:#c0c0c0;"></div>
<div style="left:976px;top:75px;width:15px;height:1px;background:#fff;"></div>
<div style="left:976px;top:75px;width:1px;height:13px;background:#fff;"></div>
<div style="left:976px;top:88px;width:16px;height:1px;background:#000;"></div>
<div style="left:991px;top:75px;width:1px;height:14px;background:#000;"></div>
<div style="left:977px;top:87px;width:14px;height:1px;background:#808080;"></div>
<div style="left:990px;top:76px;width:1px;height:12px;background:#808080;"></div>
<div style="left:979px;top:77px;width:9px;height:9px;background:#000;"></div>
<div style="left:980px;top:79px;width:7px;height:6px;background:#c0c0c0;"></div>
<div style="left:959px;top:75px;width:16px;height:14px;background:#c0c0c0;"></div>
<div style="left:959px;top:75px;width:15px;height:1px;background:#fff;"></div>
<div style="left:959px;top:75px;width:1px;height:13px;background:#fff;"></div>
<div style="left:959px;top:88px;width:16px;height:1px;background:#000;"></div>
<div style="left:974px;top:75px;width:1px;height:14px;background:#000;"></div>
<div style="left:960px;top:87px;width:14px;height:1px;background:#808080;"></div>
<div style="left:973px;top:76px;width:1px;height:12px;background:#808080;"></div>
<div style="left:963px;top:84px;width:6px;height:2px;background:#000;"></div>
<div style="left:549px;top:92px;width:462px;height:1px;background:#808080;"></div>
<div style="left:549px;top:92px;width:1px;height:390px;background:#808080;"></div>
<div style="left:550px;top:93px;width:460px;height:1px;background:#000;"></div>
<div style="left:550px;top:93px;width:1px;height:388px;background:#000;"></div>
<div style="left:550px;top:482px;width:462px;height:1px;background:#fff;"></div>
<div style="left:1011px;top:93px;width:1px;height:390px;background:#fff;"></div>
<div style="left:551px;top:94px;width:459px;height:18px;background:#cccccc;"></div>
<div style="left:551px;top:112px;width:459px;height:1px;background:#808080;"></div>
<div style="left:551px;top:113px;width:459px;height:1px;background:#fff;"></div>
<span class="t" style="font-family:'Liberation Sans',sans-serif;font-size:12px;line-height:12px;color:#000;white-space:pre;-webkit-text-stroke:0.3px #000;transform:scaleX(0.8715);transform-origin:left top;left:556.6px;top:96.84px;"><u>F</u>ichier</span>
<span class="t" style="font-family:'Liberation Sans',sans-serif;font-size:12px;line-height:12px;color:#000;white-space:pre;-webkit-text-stroke:0.3px #000;transform:scaleX(0.8882);transform-origin:left top;left:599.4px;top:96.84px;"><u>E</u>dition</span>
<span class="t" style="font-family:'Liberation Sans',sans-serif;font-size:12px;line-height:12px;color:#000;white-space:pre;-webkit-text-stroke:0.3px #000;transform:scaleX(0.9200);transform-origin:left top;left:643.5px;top:96.84px;"><u>E</u>xécution</span>
<span class="t" style="font-family:'Liberation Sans',sans-serif;font-size:12px;line-height:12px;color:#000;white-space:pre;-webkit-text-stroke:0.3px #000;transform:scaleX(0.8833);transform-origin:left top;left:703.3px;top:96.84px;"><u>P</u>rojet</span>
<span class="t" style="font-family:'Liberation Sans',sans-serif;font-size:12px;line-height:12px;color:#000;white-space:pre;-webkit-text-stroke:0.3px #000;transform:scaleX(0.8929);transform-origin:left top;left:742px;top:96.84px;"><u>F</u>enêtres</span>
<span class="t" style="font-family:'Liberation Sans',sans-serif;font-size:12px;line-height:12px;color:#000;white-space:pre;-webkit-text-stroke:0.3px #000;transform:scaleX(0.9321);transform-origin:left top;left:795px;top:96.84px;"><u>A</u>ide</span>
<div style="left:551px;top:114px;width:459px;height:21px;background:#e4e4e4;"></div>
<div style="left:551px;top:135px;width:459px;height:1px;background:#000;"></div>
<div style="left:974px;top:94px;width:1px;height:41px;background:#000;"></div>
<div style="left:975px;top:94px;width:35px;height:41px;background:#fff;"></div>
<svg style="left:976px;top:98px" width="33" height="33" viewBox="0 0 33 33" shape-rendering="crispEdges"><rect x="0.5" y="0.5" width="31" height="31" fill="#fff" stroke="#000"/><rect x="2.5" y="2.5" width="19" height="13" fill="#fff" stroke="#000"/><path d="M4 4h2v2h-2zM7 4h2v2h-2zM10 4h2v2h-2zM16 4h4v2h-4z" fill="#000"/><rect x="4" y="7" width="11" height="5" fill="#000"/><path d="M5 10h1v1h-1zM6 8h1v2h-1zM7 8h1v1h-1zM8 9h1v2h-1zM9 10h1v1h-1zM10 8h1v2h-1zM11 8h1v1h-1zM12 9h1v2h-1zM13 10h1v1h-1z" fill="#fff"/><path d="M16 7h4v1h-4zM19 8h1v2h-1zM16 10h4v1h-4z" fill="#000"/><path d="M4 13h5v1h-5zM10 13h1v1h-1zM12 13h3v1h-3z" fill="#000"/><rect x="16" y="11" width="6" height="5" fill="#fff"/><polygon points="19.500,12.500 19.500,22.500 27,17.500" fill="#fff" stroke="#000" shape-rendering="geometricPrecision"/><path d="M16 11h3v1h-3zM16 15h3v1h-3zM16 19h3v1h-3zM27 17h3v1h-3z" fill="#000"/><path d="M21 17h3v1h-3zM22 16h1v3h-1z" fill="#000"/></svg>
<svg style="left:584px;top:118px" width="13" height="13" viewBox="0 0 13 13" shape-rendering="crispEdges"><polygon points="0.5,4.5 6.5,4.5 6.5,0.8 12.2,6.5 6.5,12.2 6.5,8.5 0.5,8.5" fill="#fff" stroke="#000" stroke-width="1" shape-rendering="geometricPrecision"/><path d="M3 6h5v1h-5zM7 5h1v3h-1z" fill="#000"/></svg>
<div style="left:623px;top:115px;width:18px;height:17px;border:1px solid #000;border-radius:2.5px;background:#dedede;box-shadow:inset 1px 1px 0 #fff, inset -1px -1px 0 #999;"></div>
<svg style="left:0;top:0" width="1016" height="748" viewBox="0 0 1016 748" shape-rendering="crispEdges"><defs><pattern id="dg623" width="2" height="2" patternUnits="userSpaceOnUse"><rect width="2" height="2" fill="#f0f0f0"/><rect x="0" y="0" width="1" height="1" fill="#606060"/></pattern><pattern id="dp623" width="2" height="2" patternUnits="userSpaceOnUse"><rect width="2" height="2" fill="#ff2020"/><rect x="0" y="0" width="1" height="1" fill="#fff"/><rect x="1" y="1" width="1" height="1" fill="#fff"/></pattern></defs><rect x="624" y="116" width="18" height="17" fill="url(#dg623)"/><polygon points="640.65,127.59 635.99,132.25 629.41,132.25 624.75,127.59 624.75,121.01 629.41,116.35 635.99,116.35 640.65,121.01" fill="#fff" stroke="#000" stroke-width="1" stroke-dasharray="1 1" shape-rendering="geometricPrecision"/><polygon points="638.06,126.52 634.92,129.66 630.48,129.66 627.34,126.52 627.34,122.08 630.48,118.94 634.92,118.94 638.06,122.08" fill="url(#dp623)"/></svg>
<div style="left:642px;top:115px;width:19px;height:17px;border:1px solid #000;border-radius:2.5px;background:#dedede;box-shadow:inset 1px 1px 0 #fff, inset -1px -1px 0 #000;"></div>
<div style="left:649px;top:119px;width:3px;height:10px;background:#000;"></div>
<div style="left:654px;top:119px;width:3px;height:10px;background:#000;"></div>
<div style="left:551px;top:136px;width:444px;height:329px;background:#b3b3b3;"></div>
<div style="left:558px;top:143px;width:436px;height:1px;background:#e6e6e6;"></div>
<div style="left:558px;top:143px;width:1px;height:283px;background:#e6e6e6;"></div>
<div style="left:558px;top:425px;width:436px;height:1px;background:#707070;"></div>
<div style="left:993px;top:143px;width:1px;height:283px;background:#707070;"></div>
<div style="left:603px;top:153px;width:377px;height:250px;background:#000;"></div>
<div style="left:603px;top:402px;width:377px;height:1px;background:#e6e6e6;"></div>
<div style="left:979px;top:153px;width:1px;height:250px;background:#e6e6e6;"></div>
<div style="left:603px;top:174px;width:376px;height:1px;background:#f00000;"></div>
<div style="left:603px;top:195px;width:376px;height:1px;background:#f00000;"></div>
<div style="left:603px;top:215px;width:376px;height:1px;background:#f00000;"></div>
<div style="left:603px;top:236px;width:376px;height:1px;background:#f00000;"></div>
<div style="left:603px;top:256px;width:376px;height:1px;background:#f00000;"></div>
<div style="left:603px;top:278px;width:376px;height:1px;background:#f00000;"></div>
<div style="left:603px;top:298px;width:376px;height:1px;background:#f00000;"></div>
<div style="left:603px;top:319px;width:376px;height:1px;background:#f00000;"></div>
<div style="left:603px;top:339px;width:376px;height:1px;background:#f00000;"></div>
<div style="left:603px;top:360px;width:376px;height:1px;background:#f00000;"></div>
<div style="left:603px;top:380px;width:376px;height:1px;background:#f00000;"></div>
<div style="left:598px;top:154px;width:5px;height:1px;background:#000;"></div>
<span class="t" style="font-family:'Liberation Sans',sans-serif;font-size:11.5px;line-height:11.5px;color:#000;white-space:pre;-webkit-text-stroke:0.3px #000;right:419px;top:148.87px;">0</span>
<div style="left:598px;top:174px;width:5px;height:1px;background:#000;"></div>
<span class="t" style="font-family:'Liberation Sans',sans-serif;font-size:11.5px;line-height:11.5px;color:#000;white-space:pre;-webkit-text-stroke:0.3px #000;right:419px;top:168.87px;">-5</span>
<div style="left:598px;top:195px;width:5px;height:1px;background:#000;"></div>
<span class="t" style="font-family:'Liberation Sans',sans-serif;font-size:11.5px;line-height:11.5px;color:#000;white-space:pre;-webkit-text-stroke:0.3px #000;right:419px;top:189.87px;">-10</span>
<div style="left:598px;top:215px;width:5px;height:1px;background:#000;"></div>
<span class="t" style="font-family:'Liberation Sans',sans-serif;font-size:11.5px;line-height:11.5px;color:#000;white-space:pre;-webkit-text-stroke:0.3px #000;right:419px;top:209.87px;">-15</span>
<div style="left:598px;top:236px;width:5px;height:1px;background:#000;"></div>
<span class="t" style="font-family:'Liberation Sans',sans-serif;font-size:11.5px;line-height:11.5px;color:#000;white-space:pre;-webkit-text-stroke:0.3px #000;right:419px;top:230.87px;">-20</span>
<div style="left:598px;top:256px;width:5px;height:1px;background:#000;"></div>
<span class="t" style="font-family:'Liberation Sans',sans-serif;font-size:11.5px;line-height:11.5px;color:#000;white-space:pre;-webkit-text-stroke:0.3px #000;right:419px;top:250.87px;">-25</span>
<div style="left:598px;top:278px;width:5px;height:1px;background:#000;"></div>
<span class="t" style="font-family:'Liberation Sans',sans-serif;font-size:11.5px;line-height:11.5px;color:#000;white-space:pre;-webkit-text-stroke:0.3px #000;right:419px;top:272.87px;">-30</span>
<div style="left:598px;top:298px;width:5px;height:1px;background:#000;"></div>
<span class="t" style="font-family:'Liberation Sans',sans-serif;font-size:11.5px;line-height:11.5px;color:#000;white-space:pre;-webkit-text-stroke:0.3px #000;right:419px;top:292.87px;">-35</span>
<div style="left:598px;top:319px;width:5px;height:1px;background:#000;"></div>
<span class="t" style="font-family:'Liberation Sans',sans-serif;font-size:11.5px;line-height:11.5px;color:#000;white-space:pre;-webkit-text-stroke:0.3px #000;right:419px;top:313.87px;">-40</span>
<div style="left:598px;top:339px;width:5px;height:1px;background:#000;"></div>
<span class="t" style="font-family:'Liberation Sans',sans-serif;font-size:11.5px;line-height:11.5px;color:#000;white-space:pre;-webkit-text-stroke:0.3px #000;right:419px;top:333.87px;">-45</span>
<div style="left:598px;top:360px;width:5px;height:1px;background:#000;"></div>
<span class="t" style="font-family:'Liberation Sans',sans-serif;font-size:11.5px;line-height:11.5px;color:#000;white-space:pre;-webkit-text-stroke:0.3px #000;right:419px;top:354.87px;">-50</span>
<div style="left:598px;top:380px;width:5px;height:1px;background:#000;"></div>
<span class="t" style="font-family:'Liberation Sans',sans-serif;font-size:11.5px;line-height:11.5px;color:#000;white-space:pre;-webkit-text-stroke:0.3px #000;right:419px;top:374.87px;">-55</span>
<div style="left:598px;top:401px;width:5px;height:1px;background:#000;"></div>
<span class="t" style="font-family:'Liberation Sans',sans-serif;font-size:11.5px;line-height:11.5px;color:#000;white-space:pre;-webkit-text-stroke:0.3px #000;right:419px;top:395.87px;">-60</span>
<svg style="left:603px;top:153px" width="376" height="249" viewBox="603 153 376 249"><rect x="602.8" y="207.9" width="3" height="3" fill="#ffff00"/><rect x="647.9" y="178.0" width="3" height="3" fill="#ffff00"/><rect x="702.8" y="172.9" width="3" height="3" fill="#ffff00"/><rect x="700.9" y="209.9" width="3" height="3" fill="#ffff00"/><rect x="759.9" y="157.0" width="3" height="3" fill="#ffff00"/><rect x="757.9" y="176.1" width="3" height="3" fill="#ffff00"/><rect x="756.0" y="205.0" width="3" height="3" fill="#ffff00"/><rect x="754.0" y="245.0" width="3" height="3" fill="#ffff00"/><rect x="817.0" y="152.1" width="3" height="3" fill="#ffff00"/><rect x="816.1" y="157.9" width="3" height="3" fill="#ffff00"/><rect x="814.1" y="167.0" width="3" height="3" fill="#ffff00"/><rect x="811.9" y="181.0" width="3" height="3" fill="#ffff00"/><rect x="810.0" y="197.9" width="3" height="3" fill="#ffff00"/><rect x="807.8" y="225.3" width="3" height="3" fill="#ffff00"/><rect x="805.8" y="268.5" width="3" height="3" fill="#ffff00"/><rect x="850.9" y="300.0" width="3" height="3" fill="#ffff00"/><rect x="852.9" y="255.8" width="3" height="3" fill="#ffff00"/><rect x="854.8" y="223.9" width="3" height="3" fill="#ffff00"/><rect x="856.8" y="204.0" width="3" height="3" fill="#ffff00"/><rect x="859.0" y="192.0" width="3" height="3" fill="#ffff00"/><rect x="860.9" y="182.0" width="3" height="3" fill="#ffff00"/><rect x="861.9" y="174.7" width="3" height="3" fill="#ffff00"/><rect x="904.1" y="319.9" width="3" height="3" fill="#ffff00"/><rect x="906.2" y="270.9" width="3" height="3" fill="#ffff00"/><rect x="908.2" y="240.8" width="3" height="3" fill="#ffff00"/><rect x="910.0" y="220.9" width="3" height="3" fill="#ffff00"/><rect x="911.9" y="209.9" width="3" height="3" fill="#ffff00"/><rect x="913.9" y="202.8" width="3" height="3" fill="#ffff00"/><rect x="915.9" y="197.9" width="3" height="3" fill="#ffff00"/><rect x="917.8" y="194.0" width="3" height="3" fill="#ffff00"/><rect x="942.0" y="327.0" width="3" height="3" fill="#ffff00"/><rect x="943.0" y="287.0" width="3" height="3" fill="#ffff00"/><rect x="945.0" y="257.8" width="3" height="3" fill="#ffff00"/><rect x="947.4" y="240.8" width="3" height="3" fill="#ffff00"/><rect x="949.3" y="230.8" width="3" height="3" fill="#ffff00"/><rect x="951.9" y="222.9" width="3" height="3" fill="#ffff00"/><rect x="953.5" y="218.8" width="3" height="3" fill="#ffff00"/><rect x="954.8" y="215.4" width="3" height="3" fill="#ffff00"/><polyline points="865.4,172.6 867.4,169.7 869.3,167.3 871.7,165.2 874.6,162.8 877.6,161.2 880.6,160 884.5,159.1 888.4,158.5 894.3,158.3 903.2,157.9" fill="none" stroke="#ffff00" stroke-width="3" stroke-linejoin="round" stroke-linecap="square"/><polyline points="920.9,192.9 922.9,190.4 925.8,188 929.8,186.4 934.7,185 942.6,184.4" fill="none" stroke="#ffff00" stroke-width="3" stroke-linejoin="round" stroke-linecap="square"/><polyline points="958.3,214.6 961.3,212.6 965.2,211 970.1,210 979,209" fill="none" stroke="#ffff00" stroke-width="3" stroke-linejoin="round" stroke-linecap="square"/></svg>
<div style="left:603px;top:404px;width:1px;height:5px;background:#000;"></div>
<div style="left:978px;top:404px;width:1px;height:5px;background:#000;"></div>
<span class="t" style="font-family:'Liberation Sans',sans-serif;font-size:11.5px;line-height:11.5px;color:#000;white-space:pre;-webkit-text-stroke:0.3px #000;transform:scaleX(0.9173);transform-origin:left top;left:586.6px;top:411.07px;">162764</span>
<div style="left:955px;top:405px;width:38px;height:20px;overflow:hidden">
<span class="t" style="font-family:'Liberation Sans',sans-serif;font-size:11.5px;line-height:11.5px;color:#000;white-space:pre;-webkit-text-stroke:0.3px #000;transform:scaleX(0.9173);transform-origin:left top;left:5.7px;top:6.07px;">162963</span>
</div>
<div style="left:786px;top:407px;width:38px;height:15px;background:#bdbdbd;"></div>
<div style="left:786px;top:407px;width:38px;height:1px;background:#e6e6e6;"></div>
<div style="left:786px;top:407px;width:1px;height:15px;background:#e6e6e6;"></div>
<div style="left:786px;top:421px;width:38px;height:1px;background:#707070;"></div>
<div style="left:823px;top:407px;width:1px;height:15px;background:#707070;"></div>
<span class="t" style="font-family:'Liberation Sans',sans-serif;font-size:12px;line-height:12px;color:#000;white-space:pre;-webkit-text-stroke:0.3px #000;transform:scaleX(0.8604);transform-origin:left top;left:789px;top:407.84px;"># point</span>
<div style="left:697px;top:430px;width:36px;height:17px;background:#bdbdbd;"></div>
<div style="left:697px;top:430px;width:36px;height:1px;background:#e6e6e6;"></div>
<div style="left:697px;top:430px;width:1px;height:17px;background:#e6e6e6;"></div>
<div style="left:697px;top:446px;width:36px;height:1px;background:#707070;"></div>
<div style="left:732px;top:430px;width:1px;height:17px;background:#707070;"></div>
<span class="t" style="font-family:'Liberation Sans',sans-serif;font-size:12px;line-height:12px;color:#ff3300;white-space:pre;-webkit-text-stroke:0.3px #ff3300;transform:scaleX(0.8849);transform-origin:left top;left:699.5px;top:432.34px;">Y cour</span>
<div style="left:765px;top:432px;width:20px;height:16px;background:#bdbdbd;"></div>
<div style="left:765px;top:432px;width:20px;height:1px;background:#e6e6e6;"></div>
<div style="left:765px;top:432px;width:1px;height:16px;background:#e6e6e6;"></div>
<div style="left:765px;top:447px;width:20px;height:1px;background:#707070;"></div>
<div style="left:784px;top:432px;width:1px;height:16px;background:#707070;"></div>
<span class="t" style="font-family:'Liberation Sans',sans-serif;font-size:12px;line-height:12px;color:#000;white-space:pre;-webkit-text-stroke:0.3px #000;transform:scaleX(0.9159);transform-origin:left top;left:766.5px;top:433.84px;">#Pt</span>
<div style="left:836px;top:430px;width:27px;height:16px;background:#bdbdbd;"></div>
<div style="left:836px;top:430px;width:27px;height:1px;background:#e6e6e6;"></div>
<div style="left:836px;top:430px;width:1px;height:16px;background:#e6e6e6;"></div>
<div style="left:836px;top:445px;width:27px;height:1px;background:#707070;"></div>
<div style="left:862px;top:430px;width:1px;height:16px;background:#707070;"></div>
<span class="t" style="font-family:'Liberation Sans',sans-serif;font-size:12px;line-height:12px;color:#000;white-space:pre;-webkit-text-stroke:0.3px #000;transform:scaleX(0.8229);transform-origin:left top;left:838px;top:431.84px;">Ymin</span>
<div style="left:690px;top:449px;width:7px;height:16px;background:#c8c8c8;"></div>
<svg style="left:690px;top:449px" width="7" height="16" viewBox="0 0 7 16"><rect x="0" y="0" width="7" height="16" fill="#d8d8d8" stroke="#555" stroke-width="0.8"/><polygon points="3.5,1.5 6,5.5 1,5.5" fill="#000"/><polygon points="3.5,14.5 6,10.5 1,10.5" fill="#000"/><path d="M0 8h7" stroke="#555" stroke-width="0.8"/></svg>
<div style="left:698px;top:449px;width:50px;height:16px;background:#b8b8b8;"></div>
<div style="left:698px;top:449px;width:50px;height:1px;background:#e6e6e6;"></div>
<div style="left:698px;top:449px;width:1px;height:16px;background:#e6e6e6;"></div>
<div style="left:747px;top:449px;width:1px;height:16px;background:#e6e6e6;"></div>
<div style="left:700px;top:451px;width:46px;height:1px;background:#707070;"></div>
<div style="left:700px;top:451px;width:1px;height:14px;background:#707070;"></div>
<span class="t" style="font-family:'Liberation Sans',sans-serif;font-size:12px;line-height:12px;color:#000;white-space:pre;-webkit-text-stroke:0.3px #000;transform:scaleX(0.9403);transform-origin:left top;left:700.5px;top:452.34px;">-13.50</span>
<div style="left:758px;top:452px;width:7px;height:13px;background:#c8c8c8;"></div>
<svg style="left:758px;top:452px" width="7" height="16" viewBox="0 0 7 16"><rect x="0" y="0" width="7" height="16" fill="#d8d8d8" stroke="#555" stroke-width="0.8"/><polygon points="3.5,1.5 6,5.5 1,5.5" fill="#000"/><polygon points="3.5,14.5 6,10.5 1,10.5" fill="#000"/><path d="M0 8h7" stroke="#555" stroke-width="0.8"/></svg>
<div style="left:766px;top:452px;width:50px;height:13px;background:#b8b8b8;"></div>
<div style="left:766px;top:452px;width:50px;height:1px;background:#e6e6e6;"></div>
<div style="left:766px;top:452px;width:1px;height:13px;background:#e6e6e6;"></div>
<div style="left:815px;top:452px;width:1px;height:13px;background:#e6e6e6;"></div>
<div style="left:768px;top:454px;width:46px;height:1px;background:#707070;"></div>
<div style="left:768px;top:454px;width:1px;height:11px;background:#707070;"></div>
<span class="t" style="font-family:'Liberation Sans',sans-serif;font-size:12px;line-height:12px;color:#000;white-space:pre;-webkit-text-stroke:0.3px #000;transform:scaleX(0.8020);transform-origin:left top;left:768.5px;top:455.34px;">11</span>
<div style="left:829px;top:449px;width:7px;height:16px;background:#c8c8c8;"></div>
<svg style="left:829px;top:449px" width="7" height="16" viewBox="0 0 7 16"><rect x="0" y="0" width="7" height="16" fill="#d8d8d8" stroke="#555" stroke-width="0.8"/><polygon points="3.5,1.5 6,5.5 1,5.5" fill="#000"/><polygon points="3.5,14.5 6,10.5 1,10.5" fill="#000"/><path d="M0 8h7" stroke="#555" stroke-width="0.8"/></svg>
<div style="left:837px;top:449px;width:50px;height:16px;background:#b8b8b8;"></div>
<div style="left:837px;top:449px;width:50px;height:1px;background:#e6e6e6;"></div>
<div style="left:837px;top:449px;width:1px;height:16px;background:#e6e6e6;"></div>
<div style="left:886px;top:449px;width:1px;height:16px;background:#e6e6e6;"></div>
<div style="left:839px;top:451px;width:46px;height:1px;background:#707070;"></div>
<div style="left:839px;top:451px;width:1px;height:14px;background:#707070;"></div>
<span class="t" style="font-family:'Liberation Sans',sans-serif;font-size:12px;line-height:12px;color:#000;white-space:pre;-webkit-text-stroke:0.3px #000;transform:scaleX(0.9403);transform-origin:left top;left:839.5px;top:452.34px;">-60.00</span>
<div style="left:994px;top:136px;width:1px;height:329px;background:#808080;"></div>
<div style="left:995px;top:136px;width:15px;height:329px;background:#cacaca;"></div>
<div style="left:1008px;top:136px;width:1px;height:329px;background:#fff;"></div>
<div style="left:1009px;top:136px;width:1px;height:329px;background:#808080;"></div>
<div style="left:995px;top:192px;width:15px;height:166px;background:#d0d0d0;"></div>
<div style="left:995px;top:192px;width:14px;height:1px;background:#fff;"></div>
<div style="left:995px;top:192px;width:1px;height:165px;background:#fff;"></div>
<div style="left:995px;top:357px;width:15px;height:1px;background:#000;"></div>
<div style="left:1009px;top:192px;width:1px;height:166px;background:#000;"></div>
<div style="left:995px;top:137px;width:15px;height:16px;background:#cccccc;"></div>
<div style="left:995px;top:137px;width:14px;height:1px;background:#fff;"></div>
<div style="left:995px;top:137px;width:1px;height:15px;background:#fff;"></div>
<div style="left:996px;top:138px;width:13px;height:1px;background:#fff;"></div>
<div style="left:996px;top:138px;width:1px;height:14px;background:#fff;"></div>
<div style="left:995px;top:152px;width:15px;height:1px;background:#000;"></div>
<div style="left:1009px;top:137px;width:1px;height:16px;background:#000;"></div>
<svg style="left:0;top:0" width="1016" height="748"><polygon points="998.5,147 1005.5,147 1002,143" fill="#000"/></svg>
<div style="left:995px;top:450px;width:15px;height:15px;background:#cccccc;"></div>
<div style="left:995px;top:450px;width:14px;height:1px;background:#fff;"></div>
<div style="left:995px;top:450px;width:1px;height:14px;background:#fff;"></div>
<div style="left:996px;top:451px;width:13px;height:1px;background:#fff;"></div>
<div style="left:996px;top:451px;width:1px;height:13px;background:#fff;"></div>
<div style="left:995px;top:464px;width:15px;height:1px;background:#000;"></div>
<div style="left:1009px;top:450px;width:1px;height:15px;background:#000;"></div>
<svg style="left:0;top:0" width="1016" height="748"><polygon points="998.5,456 1005.5,456 1002,460" fill="#000"/></svg>
<div style="left:551px;top:465px;width:444px;height:16px;background:#cacaca;"></div>
<div style="left:551px;top:479px;width:444px;height:1px;background:#fff;"></div>
<div style="left:551px;top:480px;width:444px;height:1px;background:#808080;"></div>
<div style="left:551px;top:465px;width:16px;height:16px;background:#cccccc;"></div>
<div style="left:551px;top:465px;width:15px;height:1px;background:#fff;"></div>
<div style="left:551px;top:465px;width:1px;height:15px;background:#fff;"></div>
<div style="left:552px;top:466px;width:14px;height:1px;background:#fff;"></div>
<div style="left:552px;top:466px;width:1px;height:14px;background:#fff;"></div>
<div style="left:551px;top:480px;width:16px;height:1px;background:#000;"></div>
<div style="left:566px;top:465px;width:1px;height:16px;background:#000;"></div>
<svg style="left:0;top:0" width="1016" height="748"><polygon points="561,469.5 561,476.5 557,473" fill="#000"/></svg>
<div style="left:673px;top:465px;width:245px;height:16px;background:#d0d0d0;"></div>
<div style="left:673px;top:465px;width:244px;height:1px;background:#fff;"></div>
<div style="left:673px;top:465px;width:1px;height:15px;background:#fff;"></div>
<div style="left:673px;top:480px;width:245px;height:1px;background:#000;"></div>
<div style="left:917px;top:465px;width:1px;height:16px;background:#000;"></div>
<div style="left:980px;top:465px;width:15px;height:16px;background:#cccccc;"></div>
<div style="left:980px;top:465px;width:14px;height:1px;background:#fff;"></div>
<div style="left:980px;top:465px;width:1px;height:15px;background:#fff;"></div>
<div style="left:981px;top:466px;width:13px;height:1px;background:#fff;"></div>
<div style="left:981px;top:466px;width:1px;height:14px;background:#fff;"></div>
<div style="left:980px;top:480px;width:15px;height:1px;background:#000;"></div>
<div style="left:994px;top:465px;width:1px;height:16px;background:#000;"></div>
<svg style="left:0;top:0" width="1016" height="748"><polygon points="986,469.5 986,476.5 990,473" fill="#000"/></svg>
<div style="left:995px;top:465px;width:15px;height:16px;background:#cccccc;"></div>
<svg style="left:995px;top:465px" width="15" height="16" viewBox="0 0 15 16"><path d="M11 15L14 12" stroke="#fff" stroke-width="1"/><path d="M12 15L14 13" stroke="#808080" stroke-width="1.4"/><path d="M7 15L14 8" stroke="#fff" stroke-width="1"/><path d="M8 15L14 9" stroke="#808080" stroke-width="1.4"/><path d="M3 15L14 4" stroke="#fff" stroke-width="1"/><path d="M4 15L14 5" stroke="#808080" stroke-width="1.4"/></svg>
<div style="left:17px;top:746px;width:996px;height:2px;background:#c0c0c0;"></div>
<div style="left:809px;top:743px;width:207px;height:5px;background:#000;"></div>
<div style="left:811px;top:745px;width:205px;height:3px;background:#fff;"></div>
<div style="left:656px;top:746px;width:1px;height:2px;background:#808080;"></div>
<div style="left:663px;top:746px;width:1px;height:2px;background:#808080;"></div>
<div style="left:796px;top:746px;width:1px;height:2px;background:#fff;"></div>
<div style="left:798px;top:746px;width:1px;height:2px;background:#fff;"></div>
</div></body></html>
